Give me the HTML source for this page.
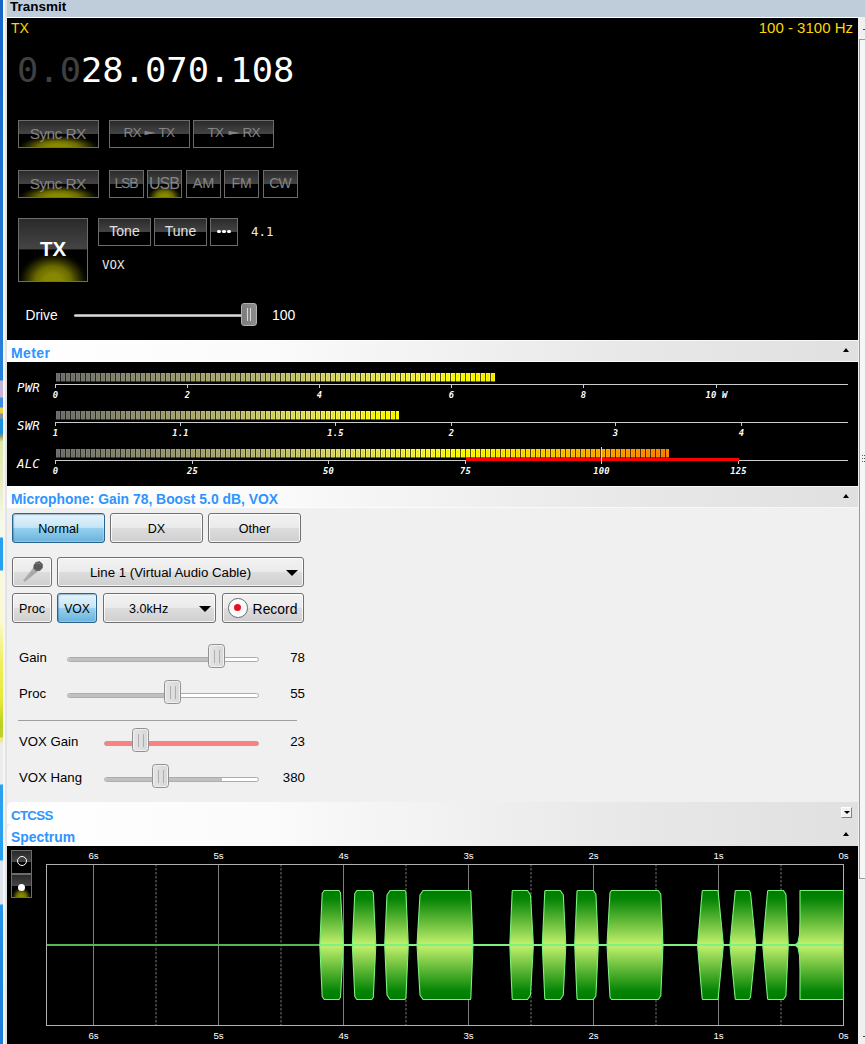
<!DOCTYPE html>
<html><head><meta charset="utf-8"><title>Transmit</title>
<style>
html,body{margin:0;padding:0;}
body{width:865px;height:1044px;overflow:hidden;position:relative;background:#f0f0f0;font-family:"Liberation Sans", "DejaVu Sans", sans-serif;font-size:13px;color:#000;}
.a{position:absolute;white-space:nowrap;}
.blk{position:absolute;background:#000;}
.hdr{position:absolute;left:7px;width:851px;background:linear-gradient(to right,#ffffff 0%,#fbfbfb 30%,#e9e9e9 70%,#e0e0e0 100%);box-shadow:inset 0 1px 0 rgba(255,255,255,0.7),inset 0 -1px 0 rgba(255,255,255,0.7);}
.hdr .t{position:absolute;left:4px;top:0;font-weight:bold;color:#2e94ff;font-size:13px;white-space:nowrap;}
.tri{position:absolute;width:0;height:0;border-left:3.5px solid transparent;border-right:3.5px solid transparent;border-bottom:4px solid #000;}
/* dark glossy buttons */
.db{position:absolute;box-sizing:border-box;border:1px solid #6c6c6c;background:linear-gradient(to bottom,#2a2a2a 0%,#444444 48%,#000 50%,#000 100%);color:#e0e0e0;text-align:center;white-space:nowrap;overflow:hidden;font-size:14px;}
.db.dis{color:#858585;}
.db .glow{position:absolute;left:0;right:0;bottom:0;height:46%;background:radial-gradient(ellipse 52% 100% at 50% 100%,#8a8a00 0%,#868600 25%,rgba(125,125,0,0.85) 50%,rgba(90,90,0,0.55) 72%,rgba(40,40,0,0.25) 90%,rgba(0,0,0,0) 100%);}
.db .l{position:absolute;left:0;right:0;top:0;bottom:0;}
.arw{display:inline-block;font-family:"DejaVu Sans",sans-serif;font-size:15px;width:12px;text-align:center;top:-1px;transform:scaleY(0.52);letter-spacing:0;}
.dots{display:inline-block;position:relative;top:-2px;}
.dots i{display:inline-block;width:3.4px;height:3.4px;border-radius:50%;background:#fff;margin:0 0.9px;}
/* light aero buttons */
.lb{position:absolute;box-sizing:border-box;border:1px solid #707070;border-radius:3px;background:linear-gradient(to bottom,#f2f2f2 0%,#ebebeb 48%,#dddddd 50%,#cfcfcf 100%);box-shadow:inset 0 0 0 1px rgba(255,255,255,0.8);text-align:center;white-space:nowrap;font-size:12.6px;color:#000;}
.lb.sel{border-color:#2c628b;background:linear-gradient(to bottom,#e5f4fc 0%,#c4e5f6 48%,#98d1ef 50%,#68b3db 100%);box-shadow:inset 1px 1px 1px rgba(20,80,130,0.35), inset -1px -1px 0 rgba(255,255,255,0.25);}
.dn{position:absolute;width:0;height:0;border-left:6px solid transparent;border-right:6px solid transparent;border-top:6px solid #000;}
/* sliders */
.trk{position:absolute;height:5px;box-sizing:border-box;border:1px solid #adadad;border-radius:2.5px;background:#fff;overflow:hidden;}
.trk i{position:absolute;left:0;top:0;bottom:0;background:#c0c0c0;}
.th{position:absolute;width:17px;height:24px;box-sizing:border-box;border:1px solid #909090;border-radius:3.5px;background:linear-gradient(to right,#e4e4e4,#d8d8d8);box-shadow:inset 0 0 0 1px #f0f0f0;}
.th:before,.th:after{content:"";position:absolute;top:4.5px;height:13px;width:1.4px;background:#aeaeae;}
.th:before{left:5px;} .th:after{left:9.8px;}
.lab{position:absolute;font-size:13.2px;white-space:nowrap;color:#000;}
.val{position:absolute;font-size:13.3px;white-space:nowrap;text-align:right;width:40px;color:#000;}
.ml{position:absolute;font-family:"DejaVu Sans Mono", "Liberation Mono", monospace;font-style:italic;color:#fff;font-size:13px;white-space:nowrap;}
</style></head><body>

<div class="a" style="left:0;top:0;width:3px;height:1044px;background:linear-gradient(to bottom,#1565c8 0px,#2a80d8 380px,#c8b4d8 381px,#c8b4d8 397px,#3c8ce0 398px,#3c8ce0 407px,#f0d040 408px,#f0d040 413px,#909090 414px,#909090 418px,#1e90e0 419px,#1e90e0 433px,#8a9a60 436px,#dfe6a8 442px,#e8ecc0 480px,#f6f8e8 520px,#f6f8e8 537px,#28a0f0 538px,#28a0f0 570px,#f8f8e0 571px,#fafad0 620px,#f0f060 660px,#e8e838 700px,#b8d020 725px,#c0d030 737px,#f0e890 738px,#f0e890 742px,#ececec 743px,#ececec 784px,#2aa0f0 785px,#2aa0f0 860px,#e0e4ec 861px,#e0e4ec 904px,#2896ec 905px,#2088e0 960px,#1c7cd8 1044px);"></div>
<div class="a" style="left:3px;top:0;width:2px;height:1044px;background:#f6f6f6;"></div>
<div class="a" style="left:5px;top:0;width:2px;height:1044px;background:#e4e4e4;"></div>
<div class="a" style="left:7px;top:0;width:858px;height:17px;background:#bfcddb;"></div>
<div class="a" id="title" style="left:10px;top:-2px;height:17px;line-height:17px;font-weight:bold;font-size:13.5px;color:#000;">Transmit</div>
<div class="a" style="left:7px;top:17px;width:852px;height:1px;background:#fff;"></div>
<div class="a" style="left:858px;top:18px;width:7px;height:1026px;background:#f0f0f0;"></div>
<div class="a" style="left:859px;top:39px;width:8px;height:840px;box-sizing:border-box;border:1px solid #9a9a9a;background:#f6f6f6;"></div>
<div class="a" style="left:863px;top:29px;width:2px;height:1px;background:#444;"></div>
<div class="a" style="left:863px;top:1036px;width:2px;height:1px;background:#444;"></div>
<div class="a" style="left:862px;top:455px;width:1px;height:1px;background:#555;"></div>
<div class="a" style="left:864px;top:455px;width:1px;height:1px;background:#555;"></div>
<div class="a" style="left:862px;top:458px;width:1px;height:1px;background:#555;"></div>
<div class="a" style="left:864px;top:458px;width:1px;height:1px;background:#555;"></div>
<div class="a" style="left:862px;top:461px;width:1px;height:1px;background:#555;"></div>
<div class="a" style="left:864px;top:461px;width:1px;height:1px;background:#555;"></div>
<div class="blk" style="left:7px;top:18px;width:851px;height:322px;"></div>
<div class="a" id="txl" style="left:11px;top:18px;height:20px;line-height:20px;font-size:14px;color:#ffd700;">TX</div>
<div class="a" id="hz" style="right:12px;top:18px;height:20px;line-height:20px;font-size:15px;color:#ffd700;">100 - 3100 Hz</div>
<div class="a" id="freq" style="left:17px;top:47.5px;height:46px;line-height:46px;font-family:'DejaVu Sans Mono', 'Liberation Mono', monospace;font-size:35.45px;color:#fff;transform:scaleY(0.93);transform-origin:0 50%;"><span style="color:#404040">0.0</span>28.070.108</div>
<div class="db dis" style="left:18px;top:120px;width:81px;height:28px;line-height:25px;font-size:15.5px;letter-spacing:-0.6px;text-indent:-1.6px;"><div class="glow"></div><div class="l">Sync RX</div></div>
<div class="db dis" style="left:109px;top:120px;width:81px;height:28px;line-height:25px;font-size:13.6px;"><div class="l"><span style="position:absolute;left:13.5px;top:-0.7px;letter-spacing:-0.8px;">RX</span><span class="arw" style="position:absolute;left:34.4px;">&#9658;</span><span style="position:absolute;left:48.5px;top:-0.7px;letter-spacing:-0.8px;">TX</span></div></div>
<div class="db dis" style="left:193px;top:120px;width:81px;height:28px;line-height:25px;font-size:13.6px;"><div class="l"><span style="position:absolute;left:13.5px;top:-0.7px;letter-spacing:-0.8px;">TX</span><span class="arw" style="position:absolute;left:34.4px;">&#9658;</span><span style="position:absolute;left:48.5px;top:-0.7px;letter-spacing:-0.8px;">RX</span></div></div>
<div class="db dis" style="left:18px;top:170px;width:81px;height:28px;line-height:25px;font-size:15.5px;letter-spacing:-0.6px;text-indent:-1.6px;"><div class="glow"></div><div class="l">Sync RX</div></div>
<div class="db dis" style="left:109px;top:170px;width:35px;height:28px;line-height:25px;font-size:14px;letter-spacing:-1.2px;text-indent:-1.2px;"><div class="l">LSB</div></div>
<div class="db dis" style="left:147px;top:170px;width:35px;height:28px;line-height:25px;font-size:16px;letter-spacing:-1px;text-indent:-1px;"><div class="glow"></div><div class="l">USB</div></div>
<div class="db dis" style="left:186px;top:170px;width:35px;height:28px;line-height:25px;font-size:14.5px;letter-spacing:0px;text-indent:0px;"><div class="l">AM</div></div>
<div class="db dis" style="left:224px;top:170px;width:35px;height:28px;line-height:25px;font-size:14px;letter-spacing:0px;text-indent:0px;"><div class="l">FM</div></div>
<div class="db dis" style="left:263px;top:170px;width:35px;height:28px;line-height:25px;font-size:14px;letter-spacing:-0.7px;text-indent:-0.7px;"><div class="l">CW</div></div>
<div class="db" style="left:18px;top:218px;width:70px;height:64px;line-height:61px;font-size:20.5px;font-weight:bold;color:#fff;line-height:59px;"><div class="glow"></div><div class="l">TX</div></div>
<div class="db" style="left:98px;top:218px;width:53px;height:28px;line-height:25px;font-size:14px;"><div class="l">Tone</div></div>
<div class="db" style="left:154px;top:218px;width:53px;height:28px;line-height:25px;font-size:14px;"><div class="l">Tune</div></div>
<div class="db" style="left:210px;top:218px;width:28px;height:28px;line-height:25px;font-size:11px;"><div class="l"><span class="dots"><i></i><i></i><i></i></span></div></div>
<div class="a" id="v41" style="left:251px;top:222px;height:20px;line-height:20px;font-family:'DejaVu Sans Mono', 'Liberation Mono', monospace;font-size:12.5px;color:#e8e8e8;">4.1</div>
<div class="a" id="vox" style="left:102px;top:255px;height:20px;line-height:20px;font-family:'DejaVu Sans Mono', 'Liberation Mono', monospace;font-size:12.5px;color:#e8e8e8;">VOX</div>
<div class="a" id="drive" style="left:25.5px;top:305.5px;height:20px;line-height:20px;font-size:13.8px;color:#fff;">Drive</div>
<div class="a" style="left:74px;top:314px;width:170px;height:3px;border-radius:2px;background:linear-gradient(to bottom,#8a8a8a,#d8d8d8 50%,#9a9a9a);"></div>
<div class="a" style="left:241px;top:303px;width:16px;height:23px;box-sizing:border-box;border:1px solid #b0b0b0;border-radius:3px;background:linear-gradient(to right,#7c7c7c,#8c8c8c);"><i style="position:absolute;left:5px;top:4px;width:1px;height:13px;background:#d8d8d8"></i><i style="position:absolute;left:8px;top:4px;width:1px;height:13px;background:#d8d8d8"></i></div>
<div class="a" id="d100" style="left:272px;top:305px;height:20px;line-height:20px;font-size:14px;color:#fff;">100</div>
<div class="hdr" style="top:340px;height:22px;"><div class="t" id="meterh" style="line-height:26px;font-size:14px;letter-spacing:0.4px;">Meter</div><div class="tri" style="left:836.3px;top:8px;"></div></div>
<div class="blk" style="left:7px;top:362px;width:851px;height:124px;"></div>
<svg class="a" style="left:7px;top:362px;" width="851" height="124" viewBox="7 362 851 124" shape-rendering="crispEdges"><rect x="56" y="373" width="4" height="9" fill="rgb(115,115,110)"/><rect x="57" y="374" width="2" height="7" fill="rgb(106,106,105)"/><rect x="60" y="373" width="1" height="9" fill="rgb(33,33,30)"/><rect x="61" y="373" width="4" height="9" fill="rgb(117,117,110)"/><rect x="62" y="374" width="2" height="7" fill="rgb(108,108,106)"/><rect x="65" y="373" width="1" height="9" fill="rgb(34,34,31)"/><rect x="66" y="373" width="4" height="9" fill="rgb(119,119,110)"/><rect x="67" y="374" width="2" height="7" fill="rgb(110,110,106)"/><rect x="70" y="373" width="1" height="9" fill="rgb(34,34,31)"/><rect x="71" y="373" width="4" height="9" fill="rgb(121,121,111)"/><rect x="72" y="374" width="2" height="7" fill="rgb(111,111,106)"/><rect x="75" y="373" width="1" height="9" fill="rgb(35,35,31)"/><rect x="76" y="373" width="4" height="9" fill="rgb(123,123,111)"/><rect x="77" y="374" width="2" height="7" fill="rgb(113,113,107)"/><rect x="80" y="373" width="1" height="9" fill="rgb(36,36,31)"/><rect x="81" y="373" width="4" height="9" fill="rgb(125,125,112)"/><rect x="82" y="374" width="2" height="7" fill="rgb(115,115,107)"/><rect x="85" y="373" width="1" height="9" fill="rgb(36,36,31)"/><rect x="86" y="373" width="4" height="9" fill="rgb(127,127,112)"/><rect x="87" y="374" width="2" height="7" fill="rgb(117,117,108)"/><rect x="90" y="373" width="1" height="9" fill="rgb(37,37,31)"/><rect x="91" y="373" width="4" height="9" fill="rgb(129,129,113)"/><rect x="92" y="374" width="2" height="7" fill="rgb(119,119,108)"/><rect x="95" y="373" width="1" height="9" fill="rgb(37,37,31)"/><rect x="96" y="373" width="4" height="9" fill="rgb(131,131,113)"/><rect x="97" y="374" width="2" height="7" fill="rgb(121,121,108)"/><rect x="100" y="373" width="1" height="9" fill="rgb(38,38,31)"/><rect x="101" y="373" width="4" height="9" fill="rgb(133,133,113)"/><rect x="102" y="374" width="2" height="7" fill="rgb(123,123,109)"/><rect x="105" y="373" width="1" height="9" fill="rgb(39,39,31)"/><rect x="106" y="373" width="4" height="9" fill="rgb(135,135,114)"/><rect x="107" y="374" width="2" height="7" fill="rgb(124,124,109)"/><rect x="110" y="373" width="1" height="9" fill="rgb(39,39,32)"/><rect x="111" y="373" width="4" height="9" fill="rgb(137,137,114)"/><rect x="112" y="374" width="2" height="7" fill="rgb(126,126,110)"/><rect x="115" y="373" width="1" height="9" fill="rgb(40,40,32)"/><rect x="116" y="373" width="4" height="9" fill="rgb(139,139,115)"/><rect x="117" y="374" width="2" height="7" fill="rgb(128,128,110)"/><rect x="120" y="373" width="1" height="9" fill="rgb(40,40,32)"/><rect x="121" y="373" width="4" height="9" fill="rgb(141,141,115)"/><rect x="122" y="374" width="2" height="7" fill="rgb(130,130,110)"/><rect x="125" y="373" width="1" height="9" fill="rgb(41,41,32)"/><rect x="126" y="373" width="4" height="9" fill="rgb(143,143,115)"/><rect x="127" y="374" width="2" height="7" fill="rgb(132,132,111)"/><rect x="130" y="373" width="1" height="9" fill="rgb(41,41,32)"/><rect x="131" y="373" width="4" height="9" fill="rgb(145,145,116)"/><rect x="132" y="374" width="2" height="7" fill="rgb(134,134,111)"/><rect x="135" y="373" width="1" height="9" fill="rgb(42,42,32)"/><rect x="136" y="373" width="4" height="9" fill="rgb(147,147,116)"/><rect x="137" y="374" width="2" height="7" fill="rgb(136,136,112)"/><rect x="140" y="373" width="1" height="9" fill="rgb(43,43,32)"/><rect x="141" y="373" width="4" height="9" fill="rgb(149,149,117)"/><rect x="142" y="374" width="2" height="7" fill="rgb(137,137,112)"/><rect x="145" y="373" width="1" height="9" fill="rgb(43,43,32)"/><rect x="146" y="373" width="4" height="9" fill="rgb(151,151,117)"/><rect x="147" y="374" width="2" height="7" fill="rgb(139,139,112)"/><rect x="150" y="373" width="1" height="9" fill="rgb(44,44,33)"/><rect x="151" y="373" width="4" height="9" fill="rgb(153,153,117)"/><rect x="152" y="374" width="2" height="7" fill="rgb(141,141,113)"/><rect x="155" y="373" width="1" height="9" fill="rgb(44,44,33)"/><rect x="156" y="373" width="4" height="9" fill="rgb(155,155,117)"/><rect x="157" y="374" width="2" height="7" fill="rgb(143,143,113)"/><rect x="160" y="373" width="1" height="9" fill="rgb(45,45,32)"/><rect x="161" y="373" width="4" height="9" fill="rgb(157,157,117)"/><rect x="162" y="374" width="2" height="7" fill="rgb(144,144,113)"/><rect x="165" y="373" width="1" height="9" fill="rgb(45,45,32)"/><rect x="166" y="373" width="4" height="9" fill="rgb(158,158,117)"/><rect x="167" y="374" width="2" height="7" fill="rgb(146,146,112)"/><rect x="170" y="373" width="1" height="9" fill="rgb(46,46,32)"/><rect x="171" y="373" width="4" height="9" fill="rgb(160,160,117)"/><rect x="172" y="374" width="2" height="7" fill="rgb(148,148,112)"/><rect x="175" y="373" width="1" height="9" fill="rgb(46,46,32)"/><rect x="176" y="373" width="4" height="9" fill="rgb(162,162,117)"/><rect x="177" y="374" width="2" height="7" fill="rgb(149,149,112)"/><rect x="180" y="373" width="1" height="9" fill="rgb(47,47,32)"/><rect x="181" y="373" width="4" height="9" fill="rgb(164,164,117)"/><rect x="182" y="374" width="2" height="7" fill="rgb(151,151,112)"/><rect x="185" y="373" width="1" height="9" fill="rgb(47,47,32)"/><rect x="186" y="373" width="4" height="9" fill="rgb(166,166,117)"/><rect x="187" y="374" width="2" height="7" fill="rgb(153,153,112)"/><rect x="190" y="373" width="1" height="9" fill="rgb(48,48,32)"/><rect x="191" y="373" width="4" height="9" fill="rgb(167,167,116)"/><rect x="192" y="374" width="2" height="7" fill="rgb(154,154,112)"/><rect x="195" y="373" width="1" height="9" fill="rgb(48,48,32)"/><rect x="196" y="373" width="4" height="9" fill="rgb(169,169,116)"/><rect x="197" y="374" width="2" height="7" fill="rgb(156,156,112)"/><rect x="200" y="373" width="1" height="9" fill="rgb(49,49,32)"/><rect x="201" y="373" width="4" height="9" fill="rgb(171,171,116)"/><rect x="202" y="374" width="2" height="7" fill="rgb(158,158,111)"/><rect x="205" y="373" width="1" height="9" fill="rgb(49,49,32)"/><rect x="206" y="373" width="4" height="9" fill="rgb(173,173,116)"/><rect x="207" y="374" width="2" height="7" fill="rgb(159,159,111)"/><rect x="210" y="373" width="1" height="9" fill="rgb(50,50,32)"/><rect x="211" y="373" width="4" height="9" fill="rgb(175,175,116)"/><rect x="212" y="374" width="2" height="7" fill="rgb(161,161,111)"/><rect x="215" y="373" width="1" height="9" fill="rgb(51,51,32)"/><rect x="216" y="373" width="4" height="9" fill="rgb(176,176,116)"/><rect x="217" y="374" width="2" height="7" fill="rgb(163,163,111)"/><rect x="220" y="373" width="1" height="9" fill="rgb(51,51,32)"/><rect x="221" y="373" width="4" height="9" fill="rgb(178,178,116)"/><rect x="222" y="374" width="2" height="7" fill="rgb(164,164,111)"/><rect x="225" y="373" width="1" height="9" fill="rgb(52,52,32)"/><rect x="226" y="373" width="4" height="9" fill="rgb(180,180,115)"/><rect x="227" y="374" width="2" height="7" fill="rgb(166,166,111)"/><rect x="230" y="373" width="1" height="9" fill="rgb(52,52,32)"/><rect x="231" y="373" width="4" height="9" fill="rgb(182,182,115)"/><rect x="232" y="374" width="2" height="7" fill="rgb(168,168,111)"/><rect x="235" y="373" width="1" height="9" fill="rgb(53,53,32)"/><rect x="236" y="373" width="4" height="9" fill="rgb(184,184,115)"/><rect x="237" y="374" width="2" height="7" fill="rgb(169,169,111)"/><rect x="240" y="373" width="1" height="9" fill="rgb(53,53,32)"/><rect x="241" y="373" width="4" height="9" fill="rgb(185,185,115)"/><rect x="242" y="374" width="2" height="7" fill="rgb(171,171,110)"/><rect x="245" y="373" width="1" height="9" fill="rgb(54,54,32)"/><rect x="246" y="373" width="4" height="9" fill="rgb(187,187,115)"/><rect x="247" y="374" width="2" height="7" fill="rgb(173,173,110)"/><rect x="250" y="373" width="1" height="9" fill="rgb(54,54,32)"/><rect x="251" y="373" width="4" height="9" fill="rgb(189,189,115)"/><rect x="252" y="374" width="2" height="7" fill="rgb(174,174,110)"/><rect x="255" y="373" width="1" height="9" fill="rgb(55,55,32)"/><rect x="256" y="373" width="4" height="9" fill="rgb(191,191,115)"/><rect x="257" y="374" width="2" height="7" fill="rgb(176,176,110)"/><rect x="260" y="373" width="1" height="9" fill="rgb(55,55,32)"/><rect x="261" y="373" width="4" height="9" fill="rgb(193,193,114)"/><rect x="262" y="374" width="2" height="7" fill="rgb(178,178,110)"/><rect x="265" y="373" width="1" height="9" fill="rgb(56,56,31)"/><rect x="266" y="373" width="4" height="9" fill="rgb(195,195,114)"/><rect x="267" y="374" width="2" height="7" fill="rgb(180,180,109)"/><rect x="270" y="373" width="1" height="9" fill="rgb(57,57,31)"/><rect x="271" y="373" width="4" height="9" fill="rgb(197,197,113)"/><rect x="272" y="374" width="2" height="7" fill="rgb(182,182,109)"/><rect x="275" y="373" width="1" height="9" fill="rgb(57,57,31)"/><rect x="276" y="373" width="4" height="9" fill="rgb(200,200,112)"/><rect x="277" y="374" width="2" height="7" fill="rgb(184,184,108)"/><rect x="280" y="373" width="1" height="9" fill="rgb(58,58,31)"/><rect x="281" y="373" width="4" height="9" fill="rgb(202,202,112)"/><rect x="282" y="374" width="2" height="7" fill="rgb(186,186,107)"/><rect x="285" y="373" width="1" height="9" fill="rgb(59,59,31)"/><rect x="286" y="373" width="4" height="9" fill="rgb(204,204,111)"/><rect x="287" y="374" width="2" height="7" fill="rgb(189,189,107)"/><rect x="290" y="373" width="1" height="9" fill="rgb(59,59,31)"/><rect x="291" y="373" width="4" height="9" fill="rgb(207,207,111)"/><rect x="292" y="374" width="2" height="7" fill="rgb(191,191,106)"/><rect x="295" y="373" width="1" height="9" fill="rgb(60,60,30)"/><rect x="296" y="373" width="4" height="9" fill="rgb(209,209,110)"/><rect x="297" y="374" width="2" height="7" fill="rgb(193,193,106)"/><rect x="300" y="373" width="1" height="9" fill="rgb(61,61,30)"/><rect x="301" y="373" width="4" height="9" fill="rgb(211,211,110)"/><rect x="302" y="374" width="2" height="7" fill="rgb(195,195,105)"/><rect x="305" y="373" width="1" height="9" fill="rgb(61,61,30)"/><rect x="306" y="373" width="4" height="9" fill="rgb(213,213,109)"/><rect x="307" y="374" width="2" height="7" fill="rgb(197,197,105)"/><rect x="310" y="373" width="1" height="9" fill="rgb(62,62,30)"/><rect x="311" y="373" width="4" height="9" fill="rgb(216,216,108)"/><rect x="312" y="374" width="2" height="7" fill="rgb(199,199,104)"/><rect x="315" y="373" width="1" height="9" fill="rgb(63,63,30)"/><rect x="316" y="373" width="4" height="9" fill="rgb(218,218,108)"/><rect x="317" y="374" width="2" height="7" fill="rgb(201,201,103)"/><rect x="320" y="373" width="1" height="9" fill="rgb(63,63,30)"/><rect x="321" y="373" width="4" height="9" fill="rgb(220,220,107)"/><rect x="322" y="374" width="2" height="7" fill="rgb(203,203,103)"/><rect x="325" y="373" width="1" height="9" fill="rgb(64,64,29)"/><rect x="326" y="373" width="4" height="9" fill="rgb(223,223,107)"/><rect x="327" y="374" width="2" height="7" fill="rgb(205,205,102)"/><rect x="330" y="373" width="1" height="9" fill="rgb(65,65,29)"/><rect x="331" y="373" width="4" height="9" fill="rgb(225,225,106)"/><rect x="332" y="374" width="2" height="7" fill="rgb(208,208,102)"/><rect x="335" y="373" width="1" height="9" fill="rgb(65,65,29)"/><rect x="336" y="373" width="4" height="9" fill="rgb(227,227,105)"/><rect x="337" y="374" width="2" height="7" fill="rgb(210,210,101)"/><rect x="340" y="373" width="1" height="9" fill="rgb(66,66,29)"/><rect x="341" y="373" width="4" height="9" fill="rgb(229,229,105)"/><rect x="342" y="374" width="2" height="7" fill="rgb(212,212,101)"/><rect x="345" y="373" width="1" height="9" fill="rgb(66,66,28)"/><rect x="346" y="373" width="4" height="9" fill="rgb(231,231,103)"/><rect x="347" y="374" width="2" height="7" fill="rgb(213,213,99)"/><rect x="350" y="373" width="1" height="9" fill="rgb(67,67,28)"/><rect x="351" y="373" width="4" height="9" fill="rgb(233,233,100)"/><rect x="352" y="374" width="2" height="7" fill="rgb(215,215,96)"/><rect x="355" y="373" width="1" height="9" fill="rgb(67,67,27)"/><rect x="356" y="373" width="4" height="9" fill="rgb(234,234,97)"/><rect x="357" y="374" width="2" height="7" fill="rgb(216,216,93)"/><rect x="360" y="373" width="1" height="9" fill="rgb(68,68,26)"/><rect x="361" y="373" width="4" height="9" fill="rgb(236,236,94)"/><rect x="362" y="374" width="2" height="7" fill="rgb(218,217,90)"/><rect x="365" y="373" width="1" height="9" fill="rgb(68,68,25)"/><rect x="366" y="373" width="4" height="9" fill="rgb(238,237,91)"/><rect x="367" y="374" width="2" height="7" fill="rgb(219,219,87)"/><rect x="370" y="373" width="1" height="9" fill="rgb(69,68,24)"/><rect x="371" y="373" width="4" height="9" fill="rgb(239,238,88)"/><rect x="372" y="374" width="2" height="7" fill="rgb(221,220,85)"/><rect x="375" y="373" width="1" height="9" fill="rgb(69,69,23)"/><rect x="376" y="373" width="4" height="9" fill="rgb(241,240,85)"/><rect x="377" y="374" width="2" height="7" fill="rgb(222,221,82)"/><rect x="380" y="373" width="1" height="9" fill="rgb(70,69,23)"/><rect x="381" y="373" width="4" height="9" fill="rgb(242,241,82)"/><rect x="382" y="374" width="2" height="7" fill="rgb(224,223,79)"/><rect x="385" y="373" width="1" height="9" fill="rgb(70,70,22)"/><rect x="386" y="373" width="4" height="9" fill="rgb(244,243,79)"/><rect x="387" y="374" width="2" height="7" fill="rgb(225,224,76)"/><rect x="390" y="373" width="1" height="9" fill="rgb(70,70,21)"/><rect x="391" y="373" width="4" height="9" fill="rgb(245,244,76)"/><rect x="392" y="374" width="2" height="7" fill="rgb(226,225,73)"/><rect x="395" y="373" width="1" height="9" fill="rgb(71,70,20)"/><rect x="396" y="373" width="4" height="9" fill="rgb(247,246,73)"/><rect x="397" y="374" width="2" height="7" fill="rgb(228,227,70)"/><rect x="400" y="373" width="1" height="9" fill="rgb(71,71,19)"/><rect x="401" y="373" width="4" height="9" fill="rgb(248,247,70)"/><rect x="402" y="374" width="2" height="7" fill="rgb(229,228,68)"/><rect x="405" y="373" width="1" height="9" fill="rgb(72,71,19)"/><rect x="406" y="373" width="4" height="9" fill="rgb(250,248,67)"/><rect x="407" y="374" width="2" height="7" fill="rgb(231,229,65)"/><rect x="410" y="373" width="1" height="9" fill="rgb(72,72,18)"/><rect x="411" y="373" width="4" height="9" fill="rgb(252,250,65)"/><rect x="412" y="374" width="2" height="7" fill="rgb(232,231,62)"/><rect x="415" y="373" width="1" height="9" fill="rgb(73,72,17)"/><rect x="416" y="373" width="4" height="9" fill="rgb(253,251,62)"/><rect x="417" y="374" width="2" height="7" fill="rgb(234,232,59)"/><rect x="420" y="373" width="1" height="9" fill="rgb(73,73,16)"/><rect x="421" y="373" width="4" height="9" fill="rgb(255,253,59)"/><rect x="422" y="374" width="2" height="7" fill="rgb(235,233,56)"/><rect x="425" y="373" width="1" height="9" fill="rgb(73,73,15)"/><rect x="426" y="373" width="4" height="9" fill="rgb(255,254,53)"/><rect x="427" y="374" width="2" height="7" fill="rgb(236,235,51)"/><rect x="430" y="373" width="1" height="9" fill="rgb(74,73,13)"/><rect x="431" y="373" width="4" height="9" fill="rgb(255,255,46)"/><rect x="432" y="374" width="2" height="7" fill="rgb(237,236,44)"/><rect x="435" y="373" width="1" height="9" fill="rgb(74,74,11)"/><rect x="436" y="373" width="4" height="9" fill="rgb(255,255,39)"/><rect x="437" y="374" width="2" height="7" fill="rgb(238,237,38)"/><rect x="440" y="373" width="1" height="9" fill="rgb(74,74,9)"/><rect x="441" y="373" width="4" height="9" fill="rgb(255,255,32)"/><rect x="442" y="374" width="2" height="7" fill="rgb(239,238,31)"/><rect x="445" y="373" width="1" height="9" fill="rgb(75,75,7)"/><rect x="446" y="373" width="4" height="9" fill="rgb(255,255,25)"/><rect x="447" y="374" width="2" height="7" fill="rgb(241,240,24)"/><rect x="450" y="373" width="1" height="9" fill="rgb(75,75,5)"/><rect x="451" y="373" width="4" height="9" fill="rgb(255,255,18)"/><rect x="452" y="374" width="2" height="7" fill="rgb(242,241,17)"/><rect x="455" y="373" width="1" height="9" fill="rgb(75,75,3)"/><rect x="456" y="373" width="4" height="9" fill="rgb(255,255,11)"/><rect x="457" y="374" width="2" height="7" fill="rgb(243,242,10)"/><rect x="460" y="373" width="1" height="9" fill="rgb(76,76,1)"/><rect x="461" y="373" width="4" height="9" fill="rgb(255,255,4)"/><rect x="462" y="374" width="2" height="7" fill="rgb(244,244,4)"/><rect x="465" y="373" width="1" height="9" fill="rgb(76,76,0)"/><rect x="466" y="373" width="4" height="9" fill="rgb(255,255,0)"/><rect x="467" y="374" width="2" height="7" fill="rgb(244,243,0)"/><rect x="470" y="373" width="1" height="9" fill="rgb(76,75,0)"/><rect x="471" y="373" width="4" height="9" fill="rgb(255,255,0)"/><rect x="472" y="374" width="2" height="7" fill="rgb(244,240,0)"/><rect x="475" y="373" width="1" height="9" fill="rgb(76,74,0)"/><rect x="476" y="373" width="4" height="9" fill="rgb(255,255,0)"/><rect x="477" y="374" width="2" height="7" fill="rgb(244,237,0)"/><rect x="480" y="373" width="1" height="9" fill="rgb(76,73,0)"/><rect x="481" y="373" width="4" height="9" fill="rgb(255,254,0)"/><rect x="482" y="374" width="2" height="7" fill="rgb(244,234,0)"/><rect x="485" y="373" width="1" height="9" fill="rgb(76,72,0)"/><rect x="486" y="373" width="4" height="9" fill="rgb(255,251,0)"/><rect x="487" y="374" width="2" height="7" fill="rgb(244,231,0)"/><rect x="490" y="373" width="1" height="9" fill="rgb(76,71,0)"/><rect x="491" y="373" width="4" height="9" fill="rgb(255,247,0)"/><rect x="492" y="374" width="2" height="7" fill="rgb(244,228,0)"/><rect x="56" y="381" width="439" height="1" fill="rgba(0,0,0,0.55)"/><rect x="56" y="411" width="4" height="9" fill="rgb(115,115,110)"/><rect x="57" y="412" width="2" height="7" fill="rgb(106,106,105)"/><rect x="60" y="411" width="1" height="9" fill="rgb(34,34,30)"/><rect x="61" y="411" width="4" height="9" fill="rgb(117,117,110)"/><rect x="62" y="412" width="2" height="7" fill="rgb(108,108,106)"/><rect x="65" y="411" width="1" height="9" fill="rgb(34,34,31)"/><rect x="66" y="411" width="4" height="9" fill="rgb(120,120,111)"/><rect x="67" y="412" width="2" height="7" fill="rgb(111,111,106)"/><rect x="70" y="411" width="1" height="9" fill="rgb(35,35,31)"/><rect x="71" y="411" width="4" height="9" fill="rgb(122,122,111)"/><rect x="72" y="412" width="2" height="7" fill="rgb(113,113,107)"/><rect x="75" y="411" width="1" height="9" fill="rgb(36,36,31)"/><rect x="76" y="411" width="4" height="9" fill="rgb(125,125,112)"/><rect x="77" y="412" width="2" height="7" fill="rgb(115,115,107)"/><rect x="80" y="411" width="1" height="9" fill="rgb(36,36,31)"/><rect x="81" y="411" width="4" height="9" fill="rgb(127,127,112)"/><rect x="82" y="412" width="2" height="7" fill="rgb(117,117,108)"/><rect x="85" y="411" width="1" height="9" fill="rgb(37,37,31)"/><rect x="86" y="411" width="4" height="9" fill="rgb(130,130,113)"/><rect x="87" y="412" width="2" height="7" fill="rgb(120,120,108)"/><rect x="90" y="411" width="1" height="9" fill="rgb(38,38,31)"/><rect x="91" y="411" width="4" height="9" fill="rgb(132,132,113)"/><rect x="92" y="412" width="2" height="7" fill="rgb(122,122,109)"/><rect x="95" y="411" width="1" height="9" fill="rgb(39,39,31)"/><rect x="96" y="411" width="4" height="9" fill="rgb(135,135,114)"/><rect x="97" y="412" width="2" height="7" fill="rgb(124,124,109)"/><rect x="100" y="411" width="1" height="9" fill="rgb(39,39,32)"/><rect x="101" y="411" width="4" height="9" fill="rgb(137,137,114)"/><rect x="102" y="412" width="2" height="7" fill="rgb(127,127,110)"/><rect x="105" y="411" width="1" height="9" fill="rgb(40,40,32)"/><rect x="106" y="411" width="4" height="9" fill="rgb(140,140,115)"/><rect x="107" y="412" width="2" height="7" fill="rgb(129,129,110)"/><rect x="110" y="411" width="1" height="9" fill="rgb(41,41,32)"/><rect x="111" y="411" width="4" height="9" fill="rgb(142,142,115)"/><rect x="112" y="412" width="2" height="7" fill="rgb(131,131,111)"/><rect x="115" y="411" width="1" height="9" fill="rgb(41,41,32)"/><rect x="116" y="411" width="4" height="9" fill="rgb(145,145,116)"/><rect x="117" y="412" width="2" height="7" fill="rgb(133,133,111)"/><rect x="120" y="411" width="1" height="9" fill="rgb(42,42,32)"/><rect x="121" y="411" width="4" height="9" fill="rgb(147,147,116)"/><rect x="122" y="412" width="2" height="7" fill="rgb(136,136,112)"/><rect x="125" y="411" width="1" height="9" fill="rgb(43,43,32)"/><rect x="126" y="411" width="4" height="9" fill="rgb(150,150,117)"/><rect x="127" y="412" width="2" height="7" fill="rgb(138,138,112)"/><rect x="130" y="411" width="1" height="9" fill="rgb(44,44,32)"/><rect x="131" y="411" width="4" height="9" fill="rgb(152,152,117)"/><rect x="132" y="412" width="2" height="7" fill="rgb(140,140,113)"/><rect x="135" y="411" width="1" height="9" fill="rgb(44,44,33)"/><rect x="136" y="411" width="4" height="9" fill="rgb(154,154,117)"/><rect x="137" y="412" width="2" height="7" fill="rgb(143,143,113)"/><rect x="140" y="411" width="1" height="9" fill="rgb(45,45,32)"/><rect x="141" y="411" width="4" height="9" fill="rgb(157,157,117)"/><rect x="142" y="412" width="2" height="7" fill="rgb(145,145,113)"/><rect x="145" y="411" width="1" height="9" fill="rgb(45,45,32)"/><rect x="146" y="411" width="4" height="9" fill="rgb(159,159,117)"/><rect x="147" y="412" width="2" height="7" fill="rgb(147,147,112)"/><rect x="150" y="411" width="1" height="9" fill="rgb(46,46,32)"/><rect x="151" y="411" width="4" height="9" fill="rgb(161,161,117)"/><rect x="152" y="412" width="2" height="7" fill="rgb(149,149,112)"/><rect x="155" y="411" width="1" height="9" fill="rgb(47,47,32)"/><rect x="156" y="411" width="4" height="9" fill="rgb(163,163,117)"/><rect x="157" y="412" width="2" height="7" fill="rgb(151,151,112)"/><rect x="160" y="411" width="1" height="9" fill="rgb(47,47,32)"/><rect x="161" y="411" width="4" height="9" fill="rgb(166,166,117)"/><rect x="162" y="412" width="2" height="7" fill="rgb(153,153,112)"/><rect x="165" y="411" width="1" height="9" fill="rgb(48,48,32)"/><rect x="166" y="411" width="4" height="9" fill="rgb(168,168,116)"/><rect x="167" y="412" width="2" height="7" fill="rgb(155,155,112)"/><rect x="170" y="411" width="1" height="9" fill="rgb(49,49,32)"/><rect x="171" y="411" width="4" height="9" fill="rgb(170,170,116)"/><rect x="172" y="412" width="2" height="7" fill="rgb(157,157,112)"/><rect x="175" y="411" width="1" height="9" fill="rgb(49,49,32)"/><rect x="176" y="411" width="4" height="9" fill="rgb(172,172,116)"/><rect x="177" y="412" width="2" height="7" fill="rgb(159,159,111)"/><rect x="180" y="411" width="1" height="9" fill="rgb(50,50,32)"/><rect x="181" y="411" width="4" height="9" fill="rgb(175,175,116)"/><rect x="182" y="412" width="2" height="7" fill="rgb(161,161,111)"/><rect x="185" y="411" width="1" height="9" fill="rgb(51,51,32)"/><rect x="186" y="411" width="4" height="9" fill="rgb(177,177,116)"/><rect x="187" y="412" width="2" height="7" fill="rgb(163,163,111)"/><rect x="190" y="411" width="1" height="9" fill="rgb(51,51,32)"/><rect x="191" y="411" width="4" height="9" fill="rgb(179,179,116)"/><rect x="192" y="412" width="2" height="7" fill="rgb(165,165,111)"/><rect x="195" y="411" width="1" height="9" fill="rgb(52,52,32)"/><rect x="196" y="411" width="4" height="9" fill="rgb(181,181,115)"/><rect x="197" y="412" width="2" height="7" fill="rgb(167,167,111)"/><rect x="200" y="411" width="1" height="9" fill="rgb(53,53,32)"/><rect x="201" y="411" width="4" height="9" fill="rgb(183,183,115)"/><rect x="202" y="412" width="2" height="7" fill="rgb(169,169,111)"/><rect x="205" y="411" width="1" height="9" fill="rgb(53,53,32)"/><rect x="206" y="411" width="4" height="9" fill="rgb(186,186,115)"/><rect x="207" y="412" width="2" height="7" fill="rgb(171,171,110)"/><rect x="210" y="411" width="1" height="9" fill="rgb(54,54,32)"/><rect x="211" y="411" width="4" height="9" fill="rgb(188,188,115)"/><rect x="212" y="412" width="2" height="7" fill="rgb(173,173,110)"/><rect x="215" y="411" width="1" height="9" fill="rgb(54,54,32)"/><rect x="216" y="411" width="4" height="9" fill="rgb(190,190,115)"/><rect x="217" y="412" width="2" height="7" fill="rgb(175,175,110)"/><rect x="220" y="411" width="1" height="9" fill="rgb(55,55,32)"/><rect x="221" y="411" width="4" height="9" fill="rgb(192,192,114)"/><rect x="222" y="412" width="2" height="7" fill="rgb(178,178,110)"/><rect x="225" y="411" width="1" height="9" fill="rgb(56,56,31)"/><rect x="226" y="411" width="4" height="9" fill="rgb(195,195,114)"/><rect x="227" y="412" width="2" height="7" fill="rgb(180,180,109)"/><rect x="230" y="411" width="1" height="9" fill="rgb(57,57,31)"/><rect x="231" y="411" width="4" height="9" fill="rgb(198,198,113)"/><rect x="232" y="412" width="2" height="7" fill="rgb(183,183,108)"/><rect x="235" y="411" width="1" height="9" fill="rgb(58,58,31)"/><rect x="236" y="411" width="4" height="9" fill="rgb(201,201,112)"/><rect x="237" y="412" width="2" height="7" fill="rgb(185,185,108)"/><rect x="240" y="411" width="1" height="9" fill="rgb(58,58,31)"/><rect x="241" y="411" width="4" height="9" fill="rgb(204,204,111)"/><rect x="242" y="412" width="2" height="7" fill="rgb(188,188,107)"/><rect x="245" y="411" width="1" height="9" fill="rgb(59,59,31)"/><rect x="246" y="411" width="4" height="9" fill="rgb(207,207,111)"/><rect x="247" y="412" width="2" height="7" fill="rgb(191,191,106)"/><rect x="250" y="411" width="1" height="9" fill="rgb(60,60,30)"/><rect x="251" y="411" width="4" height="9" fill="rgb(209,209,110)"/><rect x="252" y="412" width="2" height="7" fill="rgb(193,193,106)"/><rect x="255" y="411" width="1" height="9" fill="rgb(61,61,30)"/><rect x="256" y="411" width="4" height="9" fill="rgb(212,212,109)"/><rect x="257" y="412" width="2" height="7" fill="rgb(196,196,105)"/><rect x="260" y="411" width="1" height="9" fill="rgb(62,62,30)"/><rect x="261" y="411" width="4" height="9" fill="rgb(215,215,108)"/><rect x="262" y="412" width="2" height="7" fill="rgb(198,198,104)"/><rect x="265" y="411" width="1" height="9" fill="rgb(63,63,30)"/><rect x="266" y="411" width="4" height="9" fill="rgb(218,218,108)"/><rect x="267" y="412" width="2" height="7" fill="rgb(201,201,103)"/><rect x="270" y="411" width="1" height="9" fill="rgb(63,63,30)"/><rect x="271" y="411" width="4" height="9" fill="rgb(221,221,107)"/><rect x="272" y="412" width="2" height="7" fill="rgb(204,204,103)"/><rect x="275" y="411" width="1" height="9" fill="rgb(64,64,29)"/><rect x="276" y="411" width="4" height="9" fill="rgb(224,224,106)"/><rect x="277" y="412" width="2" height="7" fill="rgb(206,206,102)"/><rect x="280" y="411" width="1" height="9" fill="rgb(65,65,29)"/><rect x="281" y="411" width="4" height="9" fill="rgb(226,226,106)"/><rect x="282" y="412" width="2" height="7" fill="rgb(209,209,101)"/><rect x="285" y="411" width="1" height="9" fill="rgb(66,66,29)"/><rect x="286" y="411" width="4" height="9" fill="rgb(229,229,105)"/><rect x="287" y="412" width="2" height="7" fill="rgb(212,212,101)"/><rect x="290" y="411" width="1" height="9" fill="rgb(66,66,28)"/><rect x="291" y="411" width="4" height="9" fill="rgb(232,231,102)"/><rect x="292" y="412" width="2" height="7" fill="rgb(214,214,98)"/><rect x="295" y="411" width="1" height="9" fill="rgb(67,67,27)"/><rect x="296" y="411" width="4" height="9" fill="rgb(233,233,99)"/><rect x="297" y="412" width="2" height="7" fill="rgb(215,215,95)"/><rect x="300" y="411" width="1" height="9" fill="rgb(68,67,26)"/><rect x="301" y="411" width="4" height="9" fill="rgb(235,235,95)"/><rect x="302" y="412" width="2" height="7" fill="rgb(217,217,91)"/><rect x="305" y="411" width="1" height="9" fill="rgb(68,68,25)"/><rect x="306" y="411" width="4" height="9" fill="rgb(237,237,91)"/><rect x="307" y="412" width="2" height="7" fill="rgb(219,218,88)"/><rect x="310" y="411" width="1" height="9" fill="rgb(69,68,24)"/><rect x="311" y="411" width="4" height="9" fill="rgb(239,238,88)"/><rect x="312" y="412" width="2" height="7" fill="rgb(221,220,84)"/><rect x="315" y="411" width="1" height="9" fill="rgb(69,69,23)"/><rect x="316" y="411" width="4" height="9" fill="rgb(241,240,84)"/><rect x="317" y="412" width="2" height="7" fill="rgb(223,222,81)"/><rect x="320" y="411" width="1" height="9" fill="rgb(70,69,22)"/><rect x="321" y="411" width="4" height="9" fill="rgb(243,242,81)"/><rect x="322" y="412" width="2" height="7" fill="rgb(224,223,77)"/><rect x="325" y="411" width="1" height="9" fill="rgb(70,70,21)"/><rect x="326" y="411" width="4" height="9" fill="rgb(245,244,77)"/><rect x="327" y="412" width="2" height="7" fill="rgb(226,225,74)"/><rect x="330" y="411" width="1" height="9" fill="rgb(71,70,20)"/><rect x="331" y="411" width="4" height="9" fill="rgb(247,246,73)"/><rect x="332" y="412" width="2" height="7" fill="rgb(228,227,70)"/><rect x="335" y="411" width="1" height="9" fill="rgb(71,71,19)"/><rect x="336" y="411" width="4" height="9" fill="rgb(249,247,70)"/><rect x="337" y="412" width="2" height="7" fill="rgb(230,228,67)"/><rect x="340" y="411" width="1" height="9" fill="rgb(72,71,18)"/><rect x="341" y="411" width="4" height="9" fill="rgb(251,249,66)"/><rect x="342" y="412" width="2" height="7" fill="rgb(231,230,63)"/><rect x="345" y="411" width="1" height="9" fill="rgb(73,72,17)"/><rect x="346" y="411" width="4" height="9" fill="rgb(253,251,62)"/><rect x="347" y="412" width="2" height="7" fill="rgb(233,232,60)"/><rect x="350" y="411" width="1" height="9" fill="rgb(73,73,16)"/><rect x="351" y="411" width="4" height="9" fill="rgb(255,253,59)"/><rect x="352" y="412" width="2" height="7" fill="rgb(235,233,56)"/><rect x="355" y="411" width="1" height="9" fill="rgb(74,73,14)"/><rect x="356" y="411" width="4" height="9" fill="rgb(255,254,52)"/><rect x="357" y="412" width="2" height="7" fill="rgb(236,235,50)"/><rect x="360" y="411" width="1" height="9" fill="rgb(74,74,12)"/><rect x="361" y="411" width="4" height="9" fill="rgb(255,255,43)"/><rect x="362" y="412" width="2" height="7" fill="rgb(238,236,41)"/><rect x="365" y="411" width="1" height="9" fill="rgb(74,74,9)"/><rect x="366" y="411" width="4" height="9" fill="rgb(255,255,34)"/><rect x="367" y="412" width="2" height="7" fill="rgb(239,238,33)"/><rect x="370" y="411" width="1" height="9" fill="rgb(75,75,7)"/><rect x="371" y="411" width="4" height="9" fill="rgb(255,255,26)"/><rect x="372" y="412" width="2" height="7" fill="rgb(240,240,25)"/><rect x="375" y="411" width="1" height="9" fill="rgb(75,75,4)"/><rect x="376" y="411" width="4" height="9" fill="rgb(255,255,17)"/><rect x="377" y="412" width="2" height="7" fill="rgb(242,241,16)"/><rect x="380" y="411" width="1" height="9" fill="rgb(76,76,2)"/><rect x="381" y="411" width="4" height="9" fill="rgb(255,255,8)"/><rect x="382" y="412" width="2" height="7" fill="rgb(243,243,8)"/><rect x="385" y="411" width="1" height="9" fill="rgb(76,76,0)"/><rect x="386" y="411" width="4" height="9" fill="rgb(255,255,0)"/><rect x="387" y="412" width="2" height="7" fill="rgb(244,244,0)"/><rect x="390" y="411" width="1" height="9" fill="rgb(76,75,0)"/><rect x="391" y="411" width="4" height="9" fill="rgb(255,255,0)"/><rect x="392" y="412" width="2" height="7" fill="rgb(244,241,0)"/><rect x="395" y="411" width="1" height="9" fill="rgb(76,74,0)"/><rect x="396" y="411" width="3" height="9" fill="rgb(255,255,0)"/><rect x="56" y="419" width="343" height="1" fill="rgba(0,0,0,0.55)"/><rect x="56" y="449" width="4" height="9" fill="rgb(115,115,110)"/><rect x="57" y="450" width="2" height="7" fill="rgb(106,106,105)"/><rect x="60" y="449" width="1" height="9" fill="rgb(33,33,30)"/><rect x="61" y="449" width="4" height="9" fill="rgb(117,117,110)"/><rect x="62" y="450" width="2" height="7" fill="rgb(108,108,106)"/><rect x="65" y="449" width="1" height="9" fill="rgb(34,34,31)"/><rect x="66" y="449" width="4" height="9" fill="rgb(119,119,110)"/><rect x="67" y="450" width="2" height="7" fill="rgb(110,110,106)"/><rect x="70" y="449" width="1" height="9" fill="rgb(34,34,31)"/><rect x="71" y="449" width="4" height="9" fill="rgb(121,121,111)"/><rect x="72" y="450" width="2" height="7" fill="rgb(111,111,106)"/><rect x="75" y="449" width="1" height="9" fill="rgb(35,35,31)"/><rect x="76" y="449" width="4" height="9" fill="rgb(123,123,111)"/><rect x="77" y="450" width="2" height="7" fill="rgb(113,113,107)"/><rect x="80" y="449" width="1" height="9" fill="rgb(36,36,31)"/><rect x="81" y="449" width="4" height="9" fill="rgb(125,125,112)"/><rect x="82" y="450" width="2" height="7" fill="rgb(115,115,107)"/><rect x="85" y="449" width="1" height="9" fill="rgb(36,36,31)"/><rect x="86" y="449" width="4" height="9" fill="rgb(127,127,112)"/><rect x="87" y="450" width="2" height="7" fill="rgb(117,117,108)"/><rect x="90" y="449" width="1" height="9" fill="rgb(37,37,31)"/><rect x="91" y="449" width="4" height="9" fill="rgb(129,129,113)"/><rect x="92" y="450" width="2" height="7" fill="rgb(119,119,108)"/><rect x="95" y="449" width="1" height="9" fill="rgb(37,37,31)"/><rect x="96" y="449" width="4" height="9" fill="rgb(131,131,113)"/><rect x="97" y="450" width="2" height="7" fill="rgb(121,121,108)"/><rect x="100" y="449" width="1" height="9" fill="rgb(38,38,31)"/><rect x="101" y="449" width="4" height="9" fill="rgb(133,133,113)"/><rect x="102" y="450" width="2" height="7" fill="rgb(123,123,109)"/><rect x="105" y="449" width="1" height="9" fill="rgb(39,39,31)"/><rect x="106" y="449" width="4" height="9" fill="rgb(135,135,114)"/><rect x="107" y="450" width="2" height="7" fill="rgb(124,124,109)"/><rect x="110" y="449" width="1" height="9" fill="rgb(39,39,32)"/><rect x="111" y="449" width="4" height="9" fill="rgb(137,137,114)"/><rect x="112" y="450" width="2" height="7" fill="rgb(126,126,110)"/><rect x="115" y="449" width="1" height="9" fill="rgb(40,40,32)"/><rect x="116" y="449" width="4" height="9" fill="rgb(139,139,115)"/><rect x="117" y="450" width="2" height="7" fill="rgb(128,128,110)"/><rect x="120" y="449" width="1" height="9" fill="rgb(40,40,32)"/><rect x="121" y="449" width="4" height="9" fill="rgb(141,141,115)"/><rect x="122" y="450" width="2" height="7" fill="rgb(130,130,110)"/><rect x="125" y="449" width="1" height="9" fill="rgb(41,41,32)"/><rect x="126" y="449" width="4" height="9" fill="rgb(143,143,115)"/><rect x="127" y="450" width="2" height="7" fill="rgb(132,132,111)"/><rect x="130" y="449" width="1" height="9" fill="rgb(41,41,32)"/><rect x="131" y="449" width="4" height="9" fill="rgb(145,145,116)"/><rect x="132" y="450" width="2" height="7" fill="rgb(134,134,111)"/><rect x="135" y="449" width="1" height="9" fill="rgb(42,42,32)"/><rect x="136" y="449" width="4" height="9" fill="rgb(147,147,116)"/><rect x="137" y="450" width="2" height="7" fill="rgb(136,136,112)"/><rect x="140" y="449" width="1" height="9" fill="rgb(43,43,32)"/><rect x="141" y="449" width="4" height="9" fill="rgb(149,149,117)"/><rect x="142" y="450" width="2" height="7" fill="rgb(138,138,112)"/><rect x="145" y="449" width="1" height="9" fill="rgb(43,43,32)"/><rect x="146" y="449" width="4" height="9" fill="rgb(151,151,117)"/><rect x="147" y="450" width="2" height="7" fill="rgb(139,139,112)"/><rect x="150" y="449" width="1" height="9" fill="rgb(44,44,33)"/><rect x="151" y="449" width="4" height="9" fill="rgb(153,153,117)"/><rect x="152" y="450" width="2" height="7" fill="rgb(141,141,113)"/><rect x="155" y="449" width="1" height="9" fill="rgb(44,44,33)"/><rect x="156" y="449" width="4" height="9" fill="rgb(155,155,117)"/><rect x="157" y="450" width="2" height="7" fill="rgb(143,143,113)"/><rect x="160" y="449" width="1" height="9" fill="rgb(45,45,32)"/><rect x="161" y="449" width="4" height="9" fill="rgb(157,157,117)"/><rect x="162" y="450" width="2" height="7" fill="rgb(145,145,113)"/><rect x="165" y="449" width="1" height="9" fill="rgb(45,45,32)"/><rect x="166" y="449" width="4" height="9" fill="rgb(159,159,117)"/><rect x="167" y="450" width="2" height="7" fill="rgb(146,146,112)"/><rect x="170" y="449" width="1" height="9" fill="rgb(46,46,32)"/><rect x="171" y="449" width="4" height="9" fill="rgb(160,160,117)"/><rect x="172" y="450" width="2" height="7" fill="rgb(148,148,112)"/><rect x="175" y="449" width="1" height="9" fill="rgb(46,46,32)"/><rect x="176" y="449" width="4" height="9" fill="rgb(162,162,117)"/><rect x="177" y="450" width="2" height="7" fill="rgb(150,150,112)"/><rect x="180" y="449" width="1" height="9" fill="rgb(47,47,32)"/><rect x="181" y="449" width="4" height="9" fill="rgb(164,164,117)"/><rect x="182" y="450" width="2" height="7" fill="rgb(151,151,112)"/><rect x="185" y="449" width="1" height="9" fill="rgb(47,47,32)"/><rect x="186" y="449" width="4" height="9" fill="rgb(166,166,117)"/><rect x="187" y="450" width="2" height="7" fill="rgb(153,153,112)"/><rect x="190" y="449" width="1" height="9" fill="rgb(48,48,32)"/><rect x="191" y="449" width="4" height="9" fill="rgb(168,168,116)"/><rect x="192" y="450" width="2" height="7" fill="rgb(155,155,112)"/><rect x="195" y="449" width="1" height="9" fill="rgb(49,49,32)"/><rect x="196" y="449" width="4" height="9" fill="rgb(169,169,116)"/><rect x="197" y="450" width="2" height="7" fill="rgb(156,156,112)"/><rect x="200" y="449" width="1" height="9" fill="rgb(49,49,32)"/><rect x="201" y="449" width="4" height="9" fill="rgb(171,171,116)"/><rect x="202" y="450" width="2" height="7" fill="rgb(158,158,111)"/><rect x="205" y="449" width="1" height="9" fill="rgb(50,50,32)"/><rect x="206" y="449" width="4" height="9" fill="rgb(173,173,116)"/><rect x="207" y="450" width="2" height="7" fill="rgb(160,160,111)"/><rect x="210" y="449" width="1" height="9" fill="rgb(50,50,32)"/><rect x="211" y="449" width="4" height="9" fill="rgb(175,175,116)"/><rect x="212" y="450" width="2" height="7" fill="rgb(161,161,111)"/><rect x="215" y="449" width="1" height="9" fill="rgb(51,51,32)"/><rect x="216" y="449" width="4" height="9" fill="rgb(177,177,116)"/><rect x="217" y="450" width="2" height="7" fill="rgb(163,163,111)"/><rect x="220" y="449" width="1" height="9" fill="rgb(51,51,32)"/><rect x="221" y="449" width="4" height="9" fill="rgb(178,178,116)"/><rect x="222" y="450" width="2" height="7" fill="rgb(165,165,111)"/><rect x="225" y="449" width="1" height="9" fill="rgb(52,52,32)"/><rect x="226" y="449" width="4" height="9" fill="rgb(180,180,115)"/><rect x="227" y="450" width="2" height="7" fill="rgb(166,166,111)"/><rect x="230" y="449" width="1" height="9" fill="rgb(52,52,32)"/><rect x="231" y="449" width="4" height="9" fill="rgb(182,182,115)"/><rect x="232" y="450" width="2" height="7" fill="rgb(168,168,111)"/><rect x="235" y="449" width="1" height="9" fill="rgb(53,53,32)"/><rect x="236" y="449" width="4" height="9" fill="rgb(184,184,115)"/><rect x="237" y="450" width="2" height="7" fill="rgb(170,170,110)"/><rect x="240" y="449" width="1" height="9" fill="rgb(53,53,32)"/><rect x="241" y="449" width="4" height="9" fill="rgb(186,186,115)"/><rect x="242" y="450" width="2" height="7" fill="rgb(171,171,110)"/><rect x="245" y="449" width="1" height="9" fill="rgb(54,54,32)"/><rect x="246" y="449" width="4" height="9" fill="rgb(188,188,115)"/><rect x="247" y="450" width="2" height="7" fill="rgb(173,173,110)"/><rect x="250" y="449" width="1" height="9" fill="rgb(54,54,32)"/><rect x="251" y="449" width="4" height="9" fill="rgb(189,189,115)"/><rect x="252" y="450" width="2" height="7" fill="rgb(175,175,110)"/><rect x="255" y="449" width="1" height="9" fill="rgb(55,55,32)"/><rect x="256" y="449" width="4" height="9" fill="rgb(191,191,115)"/><rect x="257" y="450" width="2" height="7" fill="rgb(176,176,110)"/><rect x="260" y="449" width="1" height="9" fill="rgb(55,55,32)"/><rect x="261" y="449" width="4" height="9" fill="rgb(193,193,114)"/><rect x="262" y="450" width="2" height="7" fill="rgb(178,178,110)"/><rect x="265" y="449" width="1" height="9" fill="rgb(56,56,31)"/><rect x="266" y="449" width="4" height="9" fill="rgb(196,196,114)"/><rect x="267" y="450" width="2" height="7" fill="rgb(180,180,109)"/><rect x="270" y="449" width="1" height="9" fill="rgb(57,57,31)"/><rect x="271" y="449" width="4" height="9" fill="rgb(198,198,113)"/><rect x="272" y="450" width="2" height="7" fill="rgb(183,183,108)"/><rect x="275" y="449" width="1" height="9" fill="rgb(57,57,31)"/><rect x="276" y="449" width="4" height="9" fill="rgb(200,200,112)"/><rect x="277" y="450" width="2" height="7" fill="rgb(185,185,108)"/><rect x="280" y="449" width="1" height="9" fill="rgb(58,58,31)"/><rect x="281" y="449" width="4" height="9" fill="rgb(202,202,112)"/><rect x="282" y="450" width="2" height="7" fill="rgb(187,187,107)"/><rect x="285" y="449" width="1" height="9" fill="rgb(59,59,31)"/><rect x="286" y="449" width="4" height="9" fill="rgb(205,205,111)"/><rect x="287" y="450" width="2" height="7" fill="rgb(189,189,107)"/><rect x="290" y="449" width="1" height="9" fill="rgb(59,59,31)"/><rect x="291" y="449" width="4" height="9" fill="rgb(207,207,111)"/><rect x="292" y="450" width="2" height="7" fill="rgb(191,191,106)"/><rect x="295" y="449" width="1" height="9" fill="rgb(60,60,30)"/><rect x="296" y="449" width="4" height="9" fill="rgb(209,209,110)"/><rect x="297" y="450" width="2" height="7" fill="rgb(193,193,106)"/><rect x="300" y="449" width="1" height="9" fill="rgb(61,61,30)"/><rect x="301" y="449" width="4" height="9" fill="rgb(212,212,109)"/><rect x="302" y="450" width="2" height="7" fill="rgb(195,195,105)"/><rect x="305" y="449" width="1" height="9" fill="rgb(61,61,30)"/><rect x="306" y="449" width="4" height="9" fill="rgb(214,214,109)"/><rect x="307" y="450" width="2" height="7" fill="rgb(197,197,104)"/><rect x="310" y="449" width="1" height="9" fill="rgb(62,62,30)"/><rect x="311" y="449" width="4" height="9" fill="rgb(216,216,108)"/><rect x="312" y="450" width="2" height="7" fill="rgb(200,200,104)"/><rect x="315" y="449" width="1" height="9" fill="rgb(63,63,30)"/><rect x="316" y="449" width="4" height="9" fill="rgb(219,219,108)"/><rect x="317" y="450" width="2" height="7" fill="rgb(202,202,103)"/><rect x="320" y="449" width="1" height="9" fill="rgb(63,63,30)"/><rect x="321" y="449" width="4" height="9" fill="rgb(221,221,107)"/><rect x="322" y="450" width="2" height="7" fill="rgb(204,204,103)"/><rect x="325" y="449" width="1" height="9" fill="rgb(64,64,29)"/><rect x="326" y="449" width="4" height="9" fill="rgb(223,223,106)"/><rect x="327" y="450" width="2" height="7" fill="rgb(206,206,102)"/><rect x="330" y="449" width="1" height="9" fill="rgb(65,65,29)"/><rect x="331" y="449" width="4" height="9" fill="rgb(225,225,106)"/><rect x="332" y="450" width="2" height="7" fill="rgb(208,208,102)"/><rect x="335" y="449" width="1" height="9" fill="rgb(65,65,29)"/><rect x="336" y="449" width="4" height="9" fill="rgb(228,228,105)"/><rect x="337" y="450" width="2" height="7" fill="rgb(210,210,101)"/><rect x="340" y="449" width="1" height="9" fill="rgb(66,66,29)"/><rect x="341" y="449" width="4" height="9" fill="rgb(230,230,105)"/><rect x="342" y="450" width="2" height="7" fill="rgb(212,212,100)"/><rect x="345" y="449" width="1" height="9" fill="rgb(66,66,28)"/><rect x="346" y="449" width="4" height="9" fill="rgb(232,232,102)"/><rect x="347" y="450" width="2" height="7" fill="rgb(214,214,98)"/><rect x="350" y="449" width="1" height="9" fill="rgb(67,67,27)"/><rect x="351" y="449" width="4" height="9" fill="rgb(233,233,99)"/><rect x="352" y="450" width="2" height="7" fill="rgb(215,215,95)"/><rect x="355" y="449" width="1" height="9" fill="rgb(67,67,27)"/><rect x="356" y="449" width="4" height="9" fill="rgb(235,235,96)"/><rect x="357" y="450" width="2" height="7" fill="rgb(217,216,92)"/><rect x="360" y="449" width="1" height="9" fill="rgb(68,68,26)"/><rect x="361" y="449" width="4" height="9" fill="rgb(236,236,93)"/><rect x="362" y="450" width="2" height="7" fill="rgb(218,218,89)"/><rect x="365" y="449" width="1" height="9" fill="rgb(68,68,25)"/><rect x="366" y="449" width="4" height="9" fill="rgb(238,237,90)"/><rect x="367" y="450" width="2" height="7" fill="rgb(220,219,86)"/><rect x="370" y="449" width="1" height="9" fill="rgb(69,69,24)"/><rect x="371" y="449" width="4" height="9" fill="rgb(240,239,87)"/><rect x="372" y="450" width="2" height="7" fill="rgb(221,220,84)"/><rect x="375" y="449" width="1" height="9" fill="rgb(69,69,23)"/><rect x="376" y="449" width="4" height="9" fill="rgb(241,240,84)"/><rect x="377" y="450" width="2" height="7" fill="rgb(223,222,81)"/><rect x="380" y="449" width="1" height="9" fill="rgb(70,69,22)"/><rect x="381" y="449" width="4" height="9" fill="rgb(243,242,81)"/><rect x="382" y="450" width="2" height="7" fill="rgb(224,223,78)"/><rect x="385" y="449" width="1" height="9" fill="rgb(70,70,22)"/><rect x="386" y="449" width="4" height="9" fill="rgb(244,243,78)"/><rect x="387" y="450" width="2" height="7" fill="rgb(225,224,75)"/><rect x="390" y="449" width="1" height="9" fill="rgb(71,70,21)"/><rect x="391" y="449" width="4" height="9" fill="rgb(246,245,75)"/><rect x="392" y="450" width="2" height="7" fill="rgb(227,226,72)"/><rect x="395" y="449" width="1" height="9" fill="rgb(71,71,20)"/><rect x="396" y="449" width="4" height="9" fill="rgb(247,246,72)"/><rect x="397" y="450" width="2" height="7" fill="rgb(228,227,69)"/><rect x="400" y="449" width="1" height="9" fill="rgb(71,71,19)"/><rect x="401" y="449" width="4" height="9" fill="rgb(249,247,69)"/><rect x="402" y="450" width="2" height="7" fill="rgb(230,228,67)"/><rect x="405" y="449" width="1" height="9" fill="rgb(72,71,18)"/><rect x="406" y="449" width="4" height="9" fill="rgb(251,249,66)"/><rect x="407" y="450" width="2" height="7" fill="rgb(231,230,64)"/><rect x="410" y="449" width="1" height="9" fill="rgb(72,72,17)"/><rect x="411" y="449" width="4" height="9" fill="rgb(252,250,64)"/><rect x="412" y="450" width="2" height="7" fill="rgb(233,231,61)"/><rect x="415" y="449" width="1" height="9" fill="rgb(73,72,17)"/><rect x="416" y="449" width="4" height="9" fill="rgb(254,252,61)"/><rect x="417" y="450" width="2" height="7" fill="rgb(234,232,58)"/><rect x="420" y="449" width="1" height="9" fill="rgb(73,73,16)"/><rect x="421" y="449" width="4" height="9" fill="rgb(255,253,58)"/><rect x="422" y="450" width="2" height="7" fill="rgb(236,234,55)"/><rect x="425" y="449" width="1" height="9" fill="rgb(74,73,14)"/><rect x="426" y="449" width="4" height="9" fill="rgb(255,255,51)"/><rect x="427" y="450" width="2" height="7" fill="rgb(237,235,49)"/><rect x="430" y="449" width="1" height="9" fill="rgb(74,73,12)"/><rect x="431" y="449" width="4" height="9" fill="rgb(255,255,44)"/><rect x="432" y="450" width="2" height="7" fill="rgb(238,236,42)"/><rect x="435" y="449" width="1" height="9" fill="rgb(74,74,10)"/><rect x="436" y="449" width="4" height="9" fill="rgb(255,255,36)"/><rect x="437" y="450" width="2" height="7" fill="rgb(239,238,35)"/><rect x="440" y="449" width="1" height="9" fill="rgb(75,74,8)"/><rect x="441" y="449" width="4" height="9" fill="rgb(255,255,29)"/><rect x="442" y="450" width="2" height="7" fill="rgb(240,239,28)"/><rect x="445" y="449" width="1" height="9" fill="rgb(75,75,6)"/><rect x="446" y="449" width="4" height="9" fill="rgb(255,255,22)"/><rect x="447" y="450" width="2" height="7" fill="rgb(241,240,21)"/><rect x="450" y="449" width="1" height="9" fill="rgb(75,75,4)"/><rect x="451" y="449" width="4" height="9" fill="rgb(255,255,15)"/><rect x="452" y="450" width="2" height="7" fill="rgb(242,241,15)"/><rect x="455" y="449" width="1" height="9" fill="rgb(76,76,2)"/><rect x="456" y="449" width="4" height="9" fill="rgb(255,255,8)"/><rect x="457" y="450" width="2" height="7" fill="rgb(243,243,8)"/><rect x="460" y="449" width="1" height="9" fill="rgb(76,76,0)"/><rect x="461" y="449" width="4" height="9" fill="rgb(255,255,1)"/><rect x="462" y="450" width="2" height="7" fill="rgb(244,244,1)"/><rect x="465" y="449" width="1" height="9" fill="rgb(76,75,0)"/><rect x="466" y="449" width="4" height="9" fill="rgb(255,255,0)"/><rect x="467" y="450" width="2" height="7" fill="rgb(244,242,0)"/><rect x="470" y="449" width="1" height="9" fill="rgb(76,74,0)"/><rect x="471" y="449" width="4" height="9" fill="rgb(255,255,0)"/><rect x="472" y="450" width="2" height="7" fill="rgb(244,239,0)"/><rect x="475" y="449" width="1" height="9" fill="rgb(76,73,0)"/><rect x="476" y="449" width="4" height="9" fill="rgb(255,255,0)"/><rect x="477" y="450" width="2" height="7" fill="rgb(244,236,0)"/><rect x="480" y="449" width="1" height="9" fill="rgb(76,72,0)"/><rect x="481" y="449" width="4" height="9" fill="rgb(255,252,0)"/><rect x="482" y="450" width="2" height="7" fill="rgb(244,233,0)"/><rect x="485" y="449" width="1" height="9" fill="rgb(76,72,0)"/><rect x="486" y="449" width="4" height="9" fill="rgb(255,249,0)"/><rect x="487" y="450" width="2" height="7" fill="rgb(244,230,0)"/><rect x="490" y="449" width="1" height="9" fill="rgb(76,71,0)"/><rect x="491" y="449" width="4" height="9" fill="rgb(255,246,0)"/><rect x="492" y="450" width="2" height="7" fill="rgb(244,227,0)"/><rect x="495" y="449" width="1" height="9" fill="rgb(76,70,0)"/><rect x="496" y="449" width="4" height="9" fill="rgb(255,243,0)"/><rect x="497" y="450" width="2" height="7" fill="rgb(244,224,0)"/><rect x="500" y="449" width="1" height="9" fill="rgb(76,69,0)"/><rect x="501" y="449" width="4" height="9" fill="rgb(255,240,0)"/><rect x="502" y="450" width="2" height="7" fill="rgb(244,221,0)"/><rect x="505" y="449" width="1" height="9" fill="rgb(76,68,0)"/><rect x="506" y="449" width="4" height="9" fill="rgb(255,236,0)"/><rect x="507" y="450" width="2" height="7" fill="rgb(244,218,0)"/><rect x="510" y="449" width="1" height="9" fill="rgb(76,67,0)"/><rect x="511" y="449" width="4" height="9" fill="rgb(255,233,0)"/><rect x="512" y="450" width="2" height="7" fill="rgb(244,215,0)"/><rect x="515" y="449" width="1" height="9" fill="rgb(76,66,0)"/><rect x="516" y="449" width="4" height="9" fill="rgb(255,230,0)"/><rect x="517" y="450" width="2" height="7" fill="rgb(244,212,0)"/><rect x="520" y="449" width="1" height="9" fill="rgb(76,65,0)"/><rect x="521" y="449" width="4" height="9" fill="rgb(255,227,0)"/><rect x="522" y="450" width="2" height="7" fill="rgb(244,209,0)"/><rect x="525" y="449" width="1" height="9" fill="rgb(76,64,0)"/><rect x="526" y="449" width="4" height="9" fill="rgb(255,223,0)"/><rect x="527" y="450" width="2" height="7" fill="rgb(244,206,0)"/><rect x="530" y="449" width="1" height="9" fill="rgb(76,63,0)"/><rect x="531" y="449" width="4" height="9" fill="rgb(255,220,0)"/><rect x="532" y="450" width="2" height="7" fill="rgb(244,203,0)"/><rect x="535" y="449" width="1" height="9" fill="rgb(76,62,0)"/><rect x="536" y="449" width="4" height="9" fill="rgb(255,217,0)"/><rect x="537" y="450" width="2" height="7" fill="rgb(244,200,0)"/><rect x="540" y="449" width="1" height="9" fill="rgb(76,61,0)"/><rect x="541" y="449" width="4" height="9" fill="rgb(255,214,0)"/><rect x="542" y="450" width="2" height="7" fill="rgb(244,197,0)"/><rect x="545" y="449" width="1" height="9" fill="rgb(76,60,0)"/><rect x="546" y="449" width="4" height="9" fill="rgb(255,211,0)"/><rect x="547" y="450" width="2" height="7" fill="rgb(244,194,0)"/><rect x="550" y="449" width="1" height="9" fill="rgb(76,59,0)"/><rect x="551" y="449" width="4" height="9" fill="rgb(255,207,0)"/><rect x="552" y="450" width="2" height="7" fill="rgb(244,191,0)"/><rect x="555" y="449" width="1" height="9" fill="rgb(76,59,0)"/><rect x="556" y="449" width="4" height="9" fill="rgb(255,204,0)"/><rect x="557" y="450" width="2" height="7" fill="rgb(244,188,0)"/><rect x="560" y="449" width="1" height="9" fill="rgb(76,58,0)"/><rect x="561" y="449" width="4" height="9" fill="rgb(255,201,0)"/><rect x="562" y="450" width="2" height="7" fill="rgb(244,185,0)"/><rect x="565" y="449" width="1" height="9" fill="rgb(76,57,0)"/><rect x="566" y="449" width="4" height="9" fill="rgb(255,198,0)"/><rect x="567" y="450" width="2" height="7" fill="rgb(244,182,0)"/><rect x="570" y="449" width="1" height="9" fill="rgb(76,56,0)"/><rect x="571" y="449" width="4" height="9" fill="rgb(255,194,0)"/><rect x="572" y="450" width="2" height="7" fill="rgb(244,179,0)"/><rect x="575" y="449" width="1" height="9" fill="rgb(76,55,0)"/><rect x="576" y="449" width="4" height="9" fill="rgb(255,191,0)"/><rect x="577" y="450" width="2" height="7" fill="rgb(244,176,0)"/><rect x="580" y="449" width="1" height="9" fill="rgb(76,54,0)"/><rect x="581" y="449" width="4" height="9" fill="rgb(255,188,0)"/><rect x="582" y="450" width="2" height="7" fill="rgb(244,173,0)"/><rect x="585" y="449" width="1" height="9" fill="rgb(76,53,0)"/><rect x="586" y="449" width="4" height="9" fill="rgb(255,185,0)"/><rect x="587" y="450" width="2" height="7" fill="rgb(244,170,0)"/><rect x="590" y="449" width="1" height="9" fill="rgb(76,52,0)"/><rect x="591" y="449" width="4" height="9" fill="rgb(255,182,0)"/><rect x="592" y="450" width="2" height="7" fill="rgb(244,168,0)"/><rect x="595" y="449" width="1" height="9" fill="rgb(76,51,0)"/><rect x="596" y="449" width="4" height="9" fill="rgb(255,178,0)"/><rect x="597" y="450" width="2" height="7" fill="rgb(244,165,0)"/><rect x="600" y="449" width="1" height="9" fill="rgb(76,50,0)"/><rect x="601" y="449" width="4" height="9" fill="rgb(255,175,0)"/><rect x="602" y="450" width="2" height="7" fill="rgb(244,162,0)"/><rect x="605" y="449" width="1" height="9" fill="rgb(76,49,0)"/><rect x="606" y="449" width="4" height="9" fill="rgb(255,172,0)"/><rect x="607" y="450" width="2" height="7" fill="rgb(244,159,0)"/><rect x="610" y="449" width="1" height="9" fill="rgb(76,48,0)"/><rect x="611" y="449" width="4" height="9" fill="rgb(255,169,0)"/><rect x="612" y="450" width="2" height="7" fill="rgb(244,156,0)"/><rect x="615" y="449" width="1" height="9" fill="rgb(76,47,0)"/><rect x="616" y="449" width="4" height="9" fill="rgb(255,165,0)"/><rect x="617" y="450" width="2" height="7" fill="rgb(244,153,0)"/><rect x="620" y="449" width="1" height="9" fill="rgb(76,46,0)"/><rect x="621" y="449" width="4" height="9" fill="rgb(255,162,0)"/><rect x="622" y="450" width="2" height="7" fill="rgb(244,150,0)"/><rect x="625" y="449" width="1" height="9" fill="rgb(76,45,0)"/><rect x="626" y="449" width="4" height="9" fill="rgb(255,159,0)"/><rect x="627" y="450" width="2" height="7" fill="rgb(244,147,0)"/><rect x="630" y="449" width="1" height="9" fill="rgb(76,45,0)"/><rect x="631" y="449" width="4" height="9" fill="rgb(255,156,0)"/><rect x="632" y="450" width="2" height="7" fill="rgb(244,144,0)"/><rect x="635" y="449" width="1" height="9" fill="rgb(76,44,0)"/><rect x="636" y="449" width="4" height="9" fill="rgb(255,153,0)"/><rect x="637" y="450" width="2" height="7" fill="rgb(244,141,0)"/><rect x="640" y="449" width="1" height="9" fill="rgb(76,43,0)"/><rect x="641" y="449" width="4" height="9" fill="rgb(255,149,0)"/><rect x="642" y="450" width="2" height="7" fill="rgb(244,138,0)"/><rect x="645" y="449" width="1" height="9" fill="rgb(76,42,0)"/><rect x="646" y="449" width="4" height="9" fill="rgb(255,146,0)"/><rect x="647" y="450" width="2" height="7" fill="rgb(244,135,0)"/><rect x="650" y="449" width="1" height="9" fill="rgb(76,41,0)"/><rect x="651" y="449" width="4" height="9" fill="rgb(255,143,0)"/><rect x="652" y="450" width="2" height="7" fill="rgb(244,132,0)"/><rect x="655" y="449" width="1" height="9" fill="rgb(76,40,0)"/><rect x="656" y="449" width="4" height="9" fill="rgb(255,140,0)"/><rect x="657" y="450" width="2" height="7" fill="rgb(244,129,0)"/><rect x="660" y="449" width="1" height="9" fill="rgb(76,39,0)"/><rect x="661" y="449" width="4" height="9" fill="rgb(255,136,0)"/><rect x="662" y="450" width="2" height="7" fill="rgb(244,126,0)"/><rect x="665" y="449" width="1" height="9" fill="rgb(76,38,0)"/><rect x="666" y="449" width="3" height="9" fill="rgb(255,133,0)"/><rect x="56" y="457" width="613" height="1" fill="rgba(0,0,0,0.55)"/><rect x="55" y="384" width="793" height="1" fill="#cccccc"/><rect x="55" y="385" width="1" height="3" fill="#cccccc"/><text x="55.5" y="398" font-family='DejaVu Sans Mono, Liberation Mono, monospace' font-size="8.8" font-weight="bold" font-style="italic" fill="#fff" text-anchor="middle" shape-rendering="auto" letter-spacing="0.2">0</text><rect x="187" y="385" width="1" height="3" fill="#cccccc"/><text x="187.5" y="398" font-family='DejaVu Sans Mono, Liberation Mono, monospace' font-size="8.8" font-weight="bold" font-style="italic" fill="#fff" text-anchor="middle" shape-rendering="auto" letter-spacing="0.2">2</text><rect x="319" y="385" width="1" height="3" fill="#cccccc"/><text x="319.5" y="398" font-family='DejaVu Sans Mono, Liberation Mono, monospace' font-size="8.8" font-weight="bold" font-style="italic" fill="#fff" text-anchor="middle" shape-rendering="auto" letter-spacing="0.2">4</text><rect x="451" y="385" width="1" height="3" fill="#cccccc"/><text x="451.5" y="398" font-family='DejaVu Sans Mono, Liberation Mono, monospace' font-size="8.8" font-weight="bold" font-style="italic" fill="#fff" text-anchor="middle" shape-rendering="auto" letter-spacing="0.2">6</text><rect x="583" y="385" width="1" height="3" fill="#cccccc"/><text x="583.5" y="398" font-family='DejaVu Sans Mono, Liberation Mono, monospace' font-size="8.8" font-weight="bold" font-style="italic" fill="#fff" text-anchor="middle" shape-rendering="auto" letter-spacing="0.2">8</text><rect x="716" y="385" width="1" height="3" fill="#cccccc"/><text x="716.5" y="398" font-family='DejaVu Sans Mono, Liberation Mono, monospace' font-size="8.8" font-weight="bold" font-style="italic" fill="#fff" text-anchor="middle" shape-rendering="auto" letter-spacing="0.2">10 W</text><rect x="55" y="422" width="793" height="1" fill="#cccccc"/><rect x="55" y="423" width="1" height="3" fill="#cccccc"/><text x="55.5" y="436" font-family='DejaVu Sans Mono, Liberation Mono, monospace' font-size="8.8" font-weight="bold" font-style="italic" fill="#fff" text-anchor="middle" shape-rendering="auto" letter-spacing="0.2">1</text><rect x="180" y="423" width="1" height="3" fill="#cccccc"/><text x="180.5" y="436" font-family='DejaVu Sans Mono, Liberation Mono, monospace' font-size="8.8" font-weight="bold" font-style="italic" fill="#fff" text-anchor="middle" shape-rendering="auto" letter-spacing="0.2">1.1</text><rect x="335" y="423" width="1" height="3" fill="#cccccc"/><text x="335.5" y="436" font-family='DejaVu Sans Mono, Liberation Mono, monospace' font-size="8.8" font-weight="bold" font-style="italic" fill="#fff" text-anchor="middle" shape-rendering="auto" letter-spacing="0.2">1.5</text><rect x="451" y="423" width="1" height="3" fill="#cccccc"/><text x="451.5" y="436" font-family='DejaVu Sans Mono, Liberation Mono, monospace' font-size="8.8" font-weight="bold" font-style="italic" fill="#fff" text-anchor="middle" shape-rendering="auto" letter-spacing="0.2">2</text><rect x="615" y="423" width="1" height="3" fill="#cccccc"/><text x="615.5" y="436" font-family='DejaVu Sans Mono, Liberation Mono, monospace' font-size="8.8" font-weight="bold" font-style="italic" fill="#fff" text-anchor="middle" shape-rendering="auto" letter-spacing="0.2">3</text><rect x="741" y="423" width="1" height="3" fill="#cccccc"/><text x="741.5" y="436" font-family='DejaVu Sans Mono, Liberation Mono, monospace' font-size="8.8" font-weight="bold" font-style="italic" fill="#fff" text-anchor="middle" shape-rendering="auto" letter-spacing="0.2">4</text><rect x="55" y="460" width="793" height="1" fill="#cccccc"/><rect x="55" y="461" width="1" height="3" fill="#cccccc"/><text x="55.5" y="474" font-family='DejaVu Sans Mono, Liberation Mono, monospace' font-size="8.8" font-weight="bold" font-style="italic" fill="#fff" text-anchor="middle" shape-rendering="auto" letter-spacing="0.2">0</text><rect x="192" y="461" width="1" height="3" fill="#cccccc"/><text x="192.5" y="474" font-family='DejaVu Sans Mono, Liberation Mono, monospace' font-size="8.8" font-weight="bold" font-style="italic" fill="#fff" text-anchor="middle" shape-rendering="auto" letter-spacing="0.2">25</text><rect x="328" y="461" width="1" height="3" fill="#cccccc"/><text x="328.5" y="474" font-family='DejaVu Sans Mono, Liberation Mono, monospace' font-size="8.8" font-weight="bold" font-style="italic" fill="#fff" text-anchor="middle" shape-rendering="auto" letter-spacing="0.2">50</text><rect x="465" y="461" width="1" height="3" fill="#cccccc"/><text x="465.5" y="474" font-family='DejaVu Sans Mono, Liberation Mono, monospace' font-size="8.8" font-weight="bold" font-style="italic" fill="#fff" text-anchor="middle" shape-rendering="auto" letter-spacing="0.2">75</text><rect x="601" y="461" width="1" height="3" fill="#cccccc"/><text x="601.5" y="474" font-family='DejaVu Sans Mono, Liberation Mono, monospace' font-size="8.8" font-weight="bold" font-style="italic" fill="#fff" text-anchor="middle" shape-rendering="auto" letter-spacing="0.2">100</text><rect x="738" y="461" width="1" height="3" fill="#cccccc"/><text x="738.5" y="474" font-family='DejaVu Sans Mono, Liberation Mono, monospace' font-size="8.8" font-weight="bold" font-style="italic" fill="#fff" text-anchor="middle" shape-rendering="auto" letter-spacing="0.2">125</text><rect x="466" y="458" width="273" height="3" fill="#ff0000"/><rect x="601" y="447" width="1" height="14" fill="#d8d8d8"/></svg>
<div class="ml" style="left:17px;top:377px;height:22px;line-height:22px;font-size:12.4px;letter-spacing:0.2px;">PWR</div>
<div class="ml" style="left:17px;top:415px;height:22px;line-height:22px;font-size:12.4px;letter-spacing:0.2px;">SWR</div>
<div class="ml" style="left:17px;top:453px;height:22px;line-height:22px;font-size:12.4px;letter-spacing:0.2px;">ALC</div>
<div class="hdr" style="top:486px;height:22px;"><div class="t" id="mich" style="line-height:26px;font-size:13.9px;">Microphone: Gain 78, Boost 5.0 dB, VOX</div><div class="tri" style="left:836.3px;top:8px;"></div></div>
<div class="lb sel" style="left:12px;top:513px;width:93px;height:30px;line-height:30px;">Normal</div>
<div class="lb" style="left:110px;top:513px;width:93px;height:30px;line-height:30px;">DX</div>
<div class="lb" style="left:208px;top:513px;width:93px;height:30px;line-height:30px;">Other</div>
<div class="lb" style="left:12px;top:557px;width:40px;height:30px;line-height:30px;"><svg width="38" height="28" viewBox="0 0 38 28" style="position:absolute;left:0;top:0"><defs><linearGradient id="mg" x1="0" y1="0" x2="1" y2="1"><stop offset="0" stop-color="#d8d8d8"/><stop offset="0.5" stop-color="#a8a8a8"/><stop offset="1" stop-color="#8c8c8c"/></linearGradient></defs><path d="M10.2 22.6 L20.6 9.4 L24.8 13.2 L11.8 23.8 Z" fill="url(#mg)" stroke="#b8b8b8" stroke-width="0.5"/><path d="M21 7.2 L22.8 4.4 L26.6 3.6 L29.4 6 L29.4 9.8 L27 12.6 L23.4 12.6 L20.8 10.4 Z" fill="#5a5a5a" stroke="#484848" stroke-width="0.6"/><path d="M23 5.6 L26 5 L27.8 6.8" stroke="#7c7c7c" stroke-width="1" fill="none"/></svg></div>
<div class="lb" style="left:57px;top:557px;width:247px;height:30px;line-height:30px;text-align:left;text-indent:32px;font-size:13.25px;">Line 1 (Virtual Audio Cable)</div>
<div class="dn" style="left:286px;top:570px;"></div>
<div class="lb" style="left:12px;top:593px;width:40px;height:30px;line-height:30px;">Proc</div>
<div class="lb sel" style="left:57px;top:593px;width:40px;height:30px;line-height:30px;font-size:12.2px;">VOX</div>
<div class="lb" style="left:103px;top:593px;width:113px;height:30px;line-height:30px;text-align:left;text-indent:25px;">3.0kHz</div>
<div class="dn" style="left:199px;top:606px;"></div>
<div class="lb" style="left:222px;top:593px;width:82px;height:30px;line-height:30px;"><span style="position:absolute;left:5px;top:4px;width:19.6px;height:19.6px;box-sizing:border-box;border:1.6px solid #6a6a6a;border-radius:50%;background:#fcfcfc;"><i style="position:absolute;left:4.5px;top:4.5px;width:7.4px;height:7.4px;border-radius:50%;background:#e81020"></i></span><span style="position:absolute;left:29.6px;top:0;font-size:13.9px;">Record</span></div>
<div class="lab" style="left:19px;top:647.5px;height:20px;line-height:20px;">Gain</div>
<div class="trk" style="left:67px;top:657px;width:192px;"><i style="width:149px"></i></div>
<div class="th" style="left:208px;top:644px;"></div>
<div class="val" style="left:265px;top:648px;height:20px;line-height:20px;">78</div>
<div class="lab" style="left:19px;top:683.5px;height:20px;line-height:20px;">Proc</div>
<div class="trk" style="left:67px;top:693px;width:192px;"><i style="width:105px"></i></div>
<div class="th" style="left:164px;top:680px;"></div>
<div class="val" style="left:265px;top:684px;height:20px;line-height:20px;">55</div>
<div class="a" style="left:18px;top:720px;width:279px;height:1px;background:#a0a0a0;"></div>
<div class="lab" style="left:19px;top:731.5px;height:20px;line-height:20px;">VOX Gain</div>
<div class="trk" style="left:104px;top:741px;width:155px;border-color:#b4a0a0;background:#f68282;"></div>
<div class="th" style="left:132px;top:728px;"></div>
<div class="val" style="left:265px;top:732px;height:20px;line-height:20px;">23</div>
<div class="lab" style="left:19px;top:767.5px;height:20px;line-height:20px;">VOX Hang</div>
<div class="trk" style="left:104px;top:777px;width:155px;"><i style="width:117px"></i></div>
<div class="th" style="left:152px;top:764px;"></div>
<div class="val" style="left:265px;top:768px;height:20px;line-height:20px;">380</div>
<div class="hdr" style="top:802px;height:22px;border-top-left-radius:6px;box-shadow:none;"><div class="t" id="cth" style="line-height:27px;font-size:13.3px;letter-spacing:-0.7px;">CTCSS</div><div class="a" style="left:834px;top:5px;width:11px;height:11px;box-sizing:border-box;background:#f2f2f2;border:1px solid #fff;border-right-color:#808080;border-bottom-color:#808080;"><div class="tri" style="left:1.5px;top:2.5px;border-bottom:none;border-top:3.5px solid #000;border-left-width:3.2px;border-right-width:3.2px;"></div></div></div>
<div class="hdr" style="top:824px;height:22px;border-top-left-radius:6px;box-shadow:none;"><div class="t" id="sph" style="line-height:26px;font-size:13.9px;">Spectrum</div><div class="tri" style="left:836.3px;top:8px;"></div></div>
<div class="blk" style="left:7px;top:846px;width:851px;height:198px;"></div>
<div class="db" style="left:11px;top:850px;width:21px;height:24px;line-height:21px;font-size:14px;"><div class="l"><span style="position:absolute;left:5px;top:5px;width:10px;height:10px;box-sizing:border-box;border:1.5px solid #fff;border-radius:50%;"></span></div></div>
<div class="db" style="left:11px;top:874px;width:21px;height:24px;line-height:21px;font-size:14px;"><div class="glow"></div><div class="l"><span style="position:absolute;left:6px;top:9px;width:7px;height:7px;border-radius:50%;background:#fff;z-index:2"></span></div></div>
<svg class="a" style="left:7px;top:846px;" width="851" height="198" viewBox="7 846 851 198"><defs><linearGradient id="wg" x1="0" y1="890" x2="0" y2="1000" gradientUnits="userSpaceOnUse"><stop offset="0" stop-color="#007c00"/><stop offset="0.08" stop-color="#058405"/><stop offset="0.5" stop-color="#c4f26e"/><stop offset="0.92" stop-color="#058405"/><stop offset="1" stop-color="#007c00"/></linearGradient></defs><line x1="93.5" y1="864" x2="93.5" y2="1026" stroke="#7e7e7e" stroke-width="1"/><line x1="156" y1="864" x2="156" y2="1026" stroke="#3a3a3a" stroke-width="2" stroke-dasharray="2.5,1.5"/><text x="93.5" y="859" font-family='Liberation Sans, DejaVu Sans, sans-serif' font-size="9.7" fill="#fff" text-anchor="middle">6s</text><text x="93.5" y="1039" font-family='Liberation Sans, DejaVu Sans, sans-serif' font-size="9.7" fill="#fff" text-anchor="middle">6s</text><line x1="218.5" y1="864" x2="218.5" y2="1026" stroke="#7e7e7e" stroke-width="1"/><line x1="281" y1="864" x2="281" y2="1026" stroke="#3a3a3a" stroke-width="2" stroke-dasharray="2.5,1.5"/><text x="218.5" y="859" font-family='Liberation Sans, DejaVu Sans, sans-serif' font-size="9.7" fill="#fff" text-anchor="middle">5s</text><text x="218.5" y="1039" font-family='Liberation Sans, DejaVu Sans, sans-serif' font-size="9.7" fill="#fff" text-anchor="middle">5s</text><line x1="343.5" y1="864" x2="343.5" y2="1026" stroke="#7e7e7e" stroke-width="1"/><line x1="406" y1="864" x2="406" y2="1026" stroke="#3a3a3a" stroke-width="2" stroke-dasharray="2.5,1.5"/><text x="343.5" y="859" font-family='Liberation Sans, DejaVu Sans, sans-serif' font-size="9.7" fill="#fff" text-anchor="middle">4s</text><text x="343.5" y="1039" font-family='Liberation Sans, DejaVu Sans, sans-serif' font-size="9.7" fill="#fff" text-anchor="middle">4s</text><line x1="468.5" y1="864" x2="468.5" y2="1026" stroke="#7e7e7e" stroke-width="1"/><line x1="531" y1="864" x2="531" y2="1026" stroke="#3a3a3a" stroke-width="2" stroke-dasharray="2.5,1.5"/><text x="468.5" y="859" font-family='Liberation Sans, DejaVu Sans, sans-serif' font-size="9.7" fill="#fff" text-anchor="middle">3s</text><text x="468.5" y="1039" font-family='Liberation Sans, DejaVu Sans, sans-serif' font-size="9.7" fill="#fff" text-anchor="middle">3s</text><line x1="593.5" y1="864" x2="593.5" y2="1026" stroke="#7e7e7e" stroke-width="1"/><line x1="656" y1="864" x2="656" y2="1026" stroke="#3a3a3a" stroke-width="2" stroke-dasharray="2.5,1.5"/><text x="593.5" y="859" font-family='Liberation Sans, DejaVu Sans, sans-serif' font-size="9.7" fill="#fff" text-anchor="middle">2s</text><text x="593.5" y="1039" font-family='Liberation Sans, DejaVu Sans, sans-serif' font-size="9.7" fill="#fff" text-anchor="middle">2s</text><line x1="718.5" y1="864" x2="718.5" y2="1026" stroke="#7e7e7e" stroke-width="1"/><line x1="781" y1="864" x2="781" y2="1026" stroke="#3a3a3a" stroke-width="2" stroke-dasharray="2.5,1.5"/><text x="718.5" y="859" font-family='Liberation Sans, DejaVu Sans, sans-serif' font-size="9.7" fill="#fff" text-anchor="middle">1s</text><text x="718.5" y="1039" font-family='Liberation Sans, DejaVu Sans, sans-serif' font-size="9.7" fill="#fff" text-anchor="middle">1s</text><text x="843.5" y="859" font-family='Liberation Sans, DejaVu Sans, sans-serif' font-size="9.7" fill="#fff" text-anchor="middle">0s</text><text x="843.5" y="1039" font-family='Liberation Sans, DejaVu Sans, sans-serif' font-size="9.7" fill="#fff" text-anchor="middle">0s</text><rect x="46.5" y="864.5" width="797" height="161" fill="none" stroke="#b0b0b0" stroke-width="1"/><line x1="47" y1="945" x2="843" y2="945" stroke="#52b852" stroke-width="2"/><path d="M319.8 945 L322.2 893.5 L324.2 890.5 L339 890.5 L340.5 892.75 L343.4 945 L340.5 997.25 L339 999.5 L324.2 999.5 L322.2 996.5 Z" fill="url(#wg)" stroke="#7cf27c" stroke-width="1.1" stroke-linejoin="round"/><path d="M352.3 945 L354.8 893.5 L356.8 890.5 L371.8 890.5 L373.3 892.75 L375.8 945 L373.3 997.25 L371.8 999.5 L356.8 999.5 L354.8 996.5 Z" fill="url(#wg)" stroke="#7cf27c" stroke-width="1.1" stroke-linejoin="round"/><path d="M384.7 945 L387 895 L390 890.5 L404.9 890.5 L405.9 892 L408.3 945 L405.9 998 L404.9 999.5 L390 999.5 L387 995 Z" fill="url(#wg)" stroke="#7cf27c" stroke-width="1.1" stroke-linejoin="round"/><path d="M417 945 L420 895 L423 890.5 L470.3 890.5 L470.8 891.25 L473 945 L470.8 998.75 L470.3 999.5 L423 999.5 L420 995 Z" fill="url(#wg)" stroke="#7cf27c" stroke-width="1.1" stroke-linejoin="round"/><path d="M509.8 945 L512.2 891.25 L512.7 890.5 L527.5 890.5 L530.5 895 L533.4 945 L530.5 995 L527.5 999.5 L512.7 999.5 L512.2 998.75 Z" fill="url(#wg)" stroke="#7cf27c" stroke-width="1.1" stroke-linejoin="round"/><path d="M542.3 945 L544.8 891.25 L545.3 890.5 L560.3 890.5 L563.3 895 L565.8 945 L563.3 995 L560.3 999.5 L545.3 999.5 L544.8 998.75 Z" fill="url(#wg)" stroke="#7cf27c" stroke-width="1.1" stroke-linejoin="round"/><path d="M574.7 945 L577 891.25 L577.5 890.5 L593.4 890.5 L595.9 894.25 L598.3 945 L595.9 995.75 L593.4 999.5 L577.5 999.5 L577 998.75 Z" fill="url(#wg)" stroke="#7cf27c" stroke-width="1.1" stroke-linejoin="round"/><path d="M607 945 L610 892.75 L611.5 890.5 L658.3 890.5 L660.8 894.25 L663 945 L660.8 995.75 L658.3 999.5 L611.5 999.5 L610 997.25 Z" fill="url(#wg)" stroke="#7cf27c" stroke-width="1.1" stroke-linejoin="round"/><path d="M697.5 945 L702.2 891.25 L702.7 890.5 L717.6 890.5 L718.1 891.25 L723.4 945 L718.1 998.75 L717.6 999.5 L702.7 999.5 L702.2 998.75 Z" fill="url(#wg)" stroke="#7cf27c" stroke-width="1.1" stroke-linejoin="round"/><path d="M729.9 945 L735.2 891.25 L735.7 890.5 L749 890.5 L750.5 892.75 L755.8 945 L750.5 997.25 L749 999.5 L735.7 999.5 L735.2 998.75 Z" fill="url(#wg)" stroke="#7cf27c" stroke-width="1.1" stroke-linejoin="round"/><path d="M762.7 945 L767.6 891.25 L768.1 890.5 L783.4 890.5 L785.9 894.25 L788.3 945 L785.9 995.75 L783.4 999.5 L768.1 999.5 L767.6 998.75 Z" fill="url(#wg)" stroke="#7cf27c" stroke-width="1.1" stroke-linejoin="round"/><path d="M795 945 L798 942.5 L799.6 934 L800 920 L800 890.5 L843.5 890.5 L843.5 999.5 L800 999.5 L800 970 L799.6 956 L798 947.5 Z" fill="url(#wg)" stroke="#7cf27c" stroke-width="1.1" stroke-linejoin="round"/><line x1="320" y1="945" x2="843" y2="945" stroke="#80f080" stroke-width="2"/><line x1="843.5" y1="864" x2="843.5" y2="1026" stroke="#b0b0b0" stroke-width="1"/></svg>
</body></html>
